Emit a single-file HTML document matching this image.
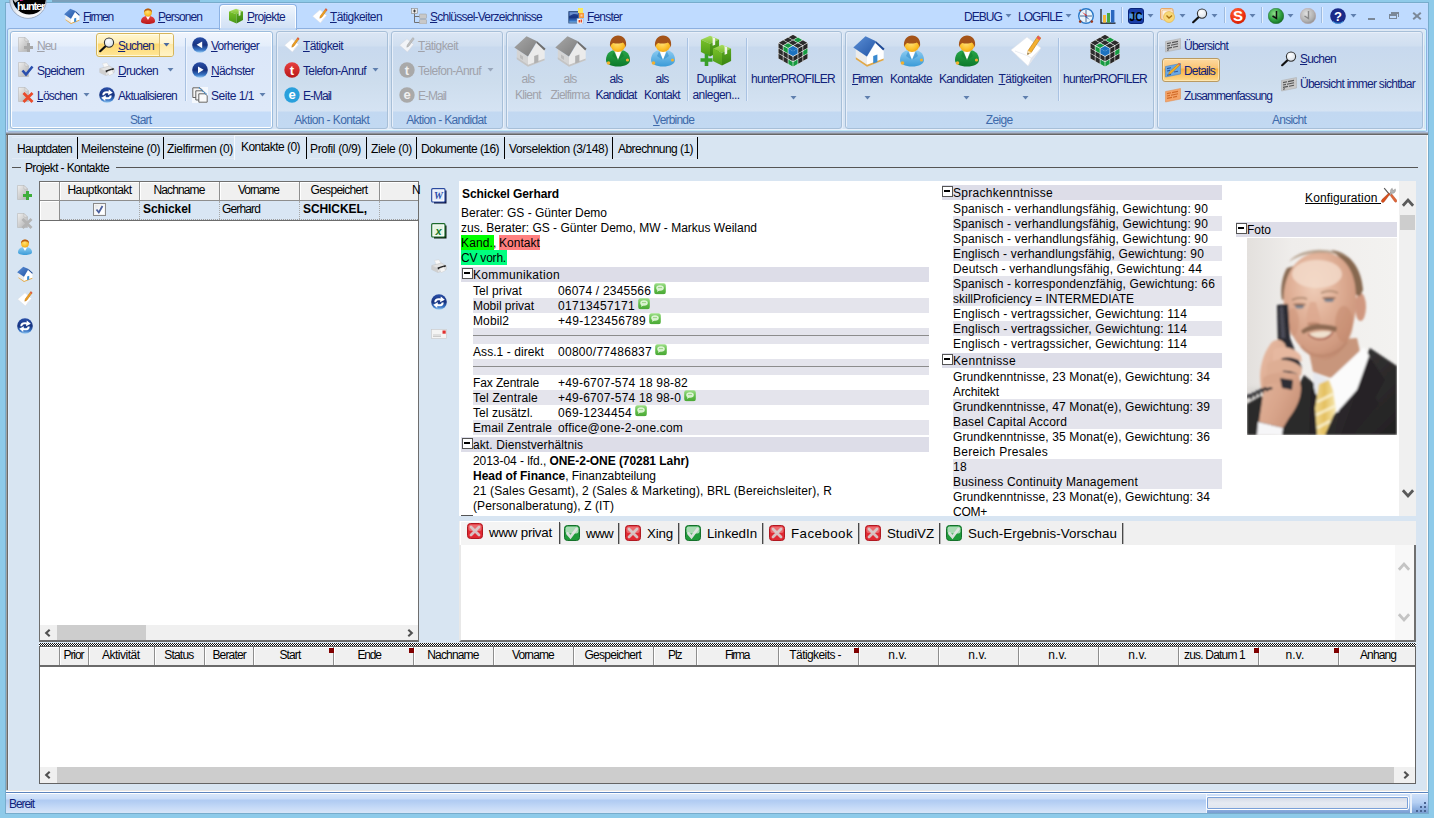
<!DOCTYPE html>
<html lang="de"><head><meta charset="utf-8"><title>hunter</title>
<style>
html,body{margin:0;padding:0}
body{width:1434px;height:818px;overflow:hidden;background:#8ecae9;font-family:"Liberation Sans",sans-serif;font-size:11px;color:#000}
#app{position:absolute;left:0;top:0;width:1434px;height:818px;overflow:hidden}
.r{position:absolute;box-sizing:border-box}
.t{position:absolute;white-space:pre}
.n{color:#10227a}
.g{color:#8d9aae}
u{text-decoration:underline;text-underline-offset:1px;text-decoration-thickness:1px}
b{font-weight:700}

</style></head><body>
<svg width="0" height="0" style="position:absolute"><defs>

<linearGradient id="gDoc" x1="0" y1="0" x2="1" y2="1"><stop offset="0" stop-color="#f0f0f0"/><stop offset="1" stop-color="#b0b0b0"/></linearGradient>
<linearGradient id="gBlue" x1="0" y1="0" x2="0" y2="1"><stop offset="0" stop-color="#2a50a8"/><stop offset=".5" stop-color="#16327f"/><stop offset=".82" stop-color="#3a78c8"/><stop offset="1" stop-color="#9fd0f4"/></linearGradient>
<linearGradient id="gRoof" x1="0" y1="0" x2="1" y2="1"><stop offset="0" stop-color="#5b8fd6"/><stop offset="1" stop-color="#2456a6"/></linearGradient>
<linearGradient id="gRoofG" x1="0" y1="0" x2="1" y2="1"><stop offset="0" stop-color="#a8a8a8"/><stop offset="1" stop-color="#7c7c7c"/></linearGradient>
<radialGradient id="gFace" cx=".45" cy=".4" r=".7"><stop offset="0" stop-color="#ffe27a"/><stop offset=".6" stop-color="#fcc02a"/><stop offset="1" stop-color="#e89a10"/></radialGradient>
<linearGradient id="gGreenB" x1="0" y1="0" x2="0" y2="1"><stop offset="0" stop-color="#2aa84a"/><stop offset="1" stop-color="#0d7a2a"/></linearGradient>
<linearGradient id="gBlueB" x1="0" y1="0" x2="0" y2="1"><stop offset="0" stop-color="#8fcdf2"/><stop offset="1" stop-color="#3a9bd8"/></linearGradient>
<linearGradient id="gRedB" x1="0" y1="0" x2="0" y2="1"><stop offset="0" stop-color="#e84040"/><stop offset="1" stop-color="#b81818"/></linearGradient>
<linearGradient id="gBoxT" x1="0" y1="0" x2="0" y2="1"><stop offset="0" stop-color="#a8dc60"/><stop offset="1" stop-color="#7cc030"/></linearGradient>
<linearGradient id="gBoxL" x1="0" y1="0" x2="0" y2="1"><stop offset="0" stop-color="#78c028"/><stop offset="1" stop-color="#4a9a18"/></linearGradient>
<linearGradient id="gBoxR" x1="0" y1="0" x2="0" y2="1"><stop offset="0" stop-color="#5aa820"/><stop offset="1" stop-color="#3a8410"/></linearGradient>
<radialGradient id="gOrb" cx=".5" cy=".8" r=".8"><stop offset="0" stop-color="#ffffff"/><stop offset=".5" stop-color="#dfe5ee"/><stop offset="1" stop-color="#9aa6b8"/></radialGradient>
<radialGradient id="gGreenC" cx=".4" cy=".35" r=".7"><stop offset="0" stop-color="#8fe08a"/><stop offset=".6" stop-color="#2fa040"/><stop offset="1" stop-color="#116a20"/></radialGradient>
<radialGradient id="gGrayC" cx=".4" cy=".35" r=".7"><stop offset="0" stop-color="#e0e0e0"/><stop offset=".7" stop-color="#b0b0b0"/><stop offset="1" stop-color="#8c8c8c"/></radialGradient>
<radialGradient id="gRedC" cx=".4" cy=".3" r=".8"><stop offset="0" stop-color="#ff6a3a"/><stop offset=".6" stop-color="#f03010"/><stop offset="1" stop-color="#c01800"/></radialGradient>
<radialGradient id="gLens" cx=".4" cy=".35" r=".7"><stop offset="0" stop-color="#ffffff"/><stop offset="1" stop-color="#d8e0e8"/></radialGradient>

<linearGradient id="gBub" x1="0" y1="0" x2="0" y2="1"><stop offset="0" stop-color="#a0e08c"/><stop offset=".5" stop-color="#62be4a"/><stop offset="1" stop-color="#4aa836"/></linearGradient>
<symbol id="doc" viewBox="0 0 16 16"><path d="M.5 .5h6.5l3.500 3.500v10.500h-10z" fill="url(#gDoc)" stroke="#b8b8b8" stroke-width=".6"/><path d="M7 .5v3.500h3.500z" fill="#e8e8e8" stroke="#b0b0b0" stroke-width=".5"/></symbol>
<symbol id="i_new_d" viewBox="0 0 16 16"><use href="#doc"/><path d="M10.5 6v9M6 10.5h9" stroke="#a8a8a8" stroke-width="3"/></symbol>
<symbol id="i_new" viewBox="0 0 16 16"><use href="#doc"/><path d="M10.5 6v9M6 10.5h9" stroke="#3fae3a" stroke-width="3"/></symbol>
<symbol id="i_save" viewBox="0 0 16 16"><use href="#doc"/><path d="M4.5 8.5l3.5 4L14.5 4.5" stroke="#2a4fae" stroke-width="2.6" fill="none"/></symbol>
<symbol id="i_del" viewBox="0 0 16 16"><use href="#doc"/><path d="M5.5 6l9 9M14.5 6l-9 9" stroke="#ea4a2a" stroke-width="2.8"/></symbol>
<symbol id="i_del_d" viewBox="0 0 16 16"><use href="#doc"/><path d="M5.5 6l9 9M14.5 6l-9 9" stroke="#b4b4b4" stroke-width="2.8"/></symbol>
<symbol id="i_search" viewBox="0 0 16 16"><path d="M7 8.8L1.2 14.2" stroke="#111" stroke-width="2.2" stroke-linecap="round"/><circle cx="10" cy="5.6" r="4.6" fill="url(#gLens)" stroke="#333" stroke-width="1.1"/></symbol>
<symbol id="i_print" viewBox="0 0 16 16"><path d="M3.500 1.500l4.500-.8 2.500 4.500-5 1.300z" fill="#fafafa" stroke="#d0d0d0" stroke-width=".4"/><path d="M.8 6.500l9.500-2.500 5 2.800v3.500l-8.300 3.200-6.200-3z" fill="#e4e4e4" stroke="#b4b4b4" stroke-width=".4"/><path d="M.8 6.500l6.200 2.800v4.200l-6.200-3z" fill="#cfcfcf"/><path d="M6.500 8.600l8-2.600.5 1.600-8 3z" fill="#222"/><path d="M8.500 9.600l4.500-1.600 1.500 3.500-4.500 2.200z" fill="#f6f6f6" stroke="#c8c8c8" stroke-width=".4"/></symbol>
<symbol id="i_refresh" viewBox="0 0 16 16"><circle cx="8" cy="8" r="7.800" fill="url(#gBlue)"/><path d="M3.300 8.200C3.200 5 6 3.600 9.600 4.500L9.800 2.500L13.800 5.800L9 8.300L9.300 6.500C7.200 6 5.400 6.600 5.300 8.200z" fill="#fff"/><path d="M3.300 8.200C3.200 5 6 3.600 9.600 4.500L9.800 2.500L13.800 5.800L9 8.300L9.300 6.500C7.200 6 5.400 6.600 5.300 8.200z" fill="#fff" transform="rotate(180 8 8.300)"/></symbol>
<symbol id="i_prev" viewBox="0 0 16 16"><circle cx="8" cy="8" r="7.800" fill="url(#gBlue)"/><path d="M10.200 4.400v6.800L4.600 7.800z" fill="#fff"/></symbol>
<symbol id="i_next" viewBox="0 0 16 16"><circle cx="8" cy="8" r="7.800" fill="url(#gBlue)"/><path d="M6 4.400v6.800l5.600-3.400z" fill="#fff"/></symbol>
<symbol id="i_pages" viewBox="0 0 16 16"><rect width="16" height="16" fill="#fff" opacity=".7"/><path d="M.8 .8h7.200l2 2v7.700H.8z" fill="#f4f4f4" stroke="#555" stroke-width=".9"/><path d="M3.800 3.800h7.200l2 2v7.200H3.800z" fill="#f4f4f4" stroke="#555" stroke-width=".9"/><path d="M6.800 6.800h6.400l2 2v6.400H6.800z" fill="#fafafa" stroke="#555" stroke-width=".9"/><path d="M7 .8l8 7" stroke="#3a8ed8" stroke-width="1.300" stroke-dasharray="1.200 1"/></symbol>
<symbol id="i_pencil" viewBox="0 0 16 16"><path d="M.6 8.2L8 1.800l6.600 5.600L8.400 15z" fill="#fff" stroke="#d8dce4" stroke-width=".5"/><path d="M8.400 15l2-3.500 4-4z" fill="#e4e6ec"/><path d="M13.800 .6l1.400 1.200-5.400 7.400-2 1 .5-2.200z" fill="#f0a020" stroke="#b87010" stroke-width=".5"/><path d="M13.800 .6l1.400 1.200-.8 1.100-1.400-1.200z" fill="#e05050"/></symbol>
<symbol id="i_tel" viewBox="0 0 16 16"><circle cx="8" cy="8" r="7.700" fill="url(#gRedB)"/><text x="8" y="12.600" font-family="Liberation Sans,sans-serif" font-weight="700" font-size="13" fill="#fff" text-anchor="middle">t</text></symbol>
<symbol id="i_mail" viewBox="0 0 16 16"><circle cx="8" cy="8" r="7.700" fill="#2aa0dc"/><text x="8" y="12" font-family="Liberation Sans,sans-serif" font-weight="700" font-size="13" fill="#fff" text-anchor="middle">e</text></symbol>
<symbol id="i_tel_d" viewBox="0 0 16 16"><circle cx="8" cy="8" r="7.700" fill="#a9a9a9"/><text x="8" y="12.600" font-family="Liberation Sans,sans-serif" font-weight="700" font-size="13" fill="#f0f0f0" text-anchor="middle">t</text></symbol>
<symbol id="i_mail_d" viewBox="0 0 16 16"><circle cx="8" cy="8" r="7.700" fill="#a9a9a9"/><text x="8" y="12" font-family="Liberation Sans,sans-serif" font-weight="700" font-size="13" fill="#f0f0f0" text-anchor="middle">e</text></symbol>
<symbol id="i_pencil_d" viewBox="0 0 16 16"><path d="M.6 8.200L8 1.800l6.600 5.600L8.400 15z" fill="#f2f4f8" stroke="#d0d4dc" stroke-width=".5"/><path d="M13.800 .6l1.400 1.200-5.400 7.400-2 1 .5-2.200z" fill="#c0c0c0" stroke="#a0a0a0" stroke-width=".5"/></symbol>

<symbol id="i_house" viewBox="0 0 32 32"><path d="M2.800 14l11.200 8v9.300L2.800 23.800z" fill="#ececec"/><path d="M14 21.500L23 7.500l7.700 7.700v9.800L14 31.300z" fill="#ffffff"/><path d="M2.800 22.300L14 29.800l16.700-6.300v1.800L14 31.800 2.800 24.200z" fill="#e0a848"/><path d="M12.500 1.300L23 6.200 13.900 21.500.3 12.400z" fill="url(#gRoof)"/><path d="M23 6.200l8.600 7.600-1.400 1.600L22.200 7.800z" fill="#1f4a96"/><path d="M20.200 21l4.200-1.600v7.600l-4.200 1.600z" fill="#3a8ad0"/></symbol>
<symbol id="i_person_r" viewBox="0 0 16 16"><path d="M1 13.500c0-4 3-5.500 7-5.500s7 1.500 7 5.500c0 1.500-3 2.500-7 2.500s-7-1-7-2.500z" fill="url(#gRedB)"/><path d="M5.800 8.200L8 12l2.200-3.800z" fill="#fff"/><circle cx="8" cy="4.600" r="3.900" fill="url(#gFace)"/><path d="M4.100 4.600C3.800 1.600 6 .4 8 .4s4.400 1.200 3.900 4.200c-.6-1.600-2-2.400-3.900-2.400-1.800 0-3.200.8-3.900 2.400z" fill="#b85a10"/></symbol>
<symbol id="i_person_b" viewBox="0 0 16 16"><path d="M1 13.500c0-4 3-5.500 7-5.500s7 1.500 7 5.500c0 1.500-3 2.500-7 2.500s-7-1-7-2.500z" fill="url(#gBlueB)"/><path d="M5.800 8.200L8 12l2.200-3.800z" fill="#fff"/><circle cx="8" cy="4.600" r="3.900" fill="url(#gFace)"/><path d="M4.100 4.600C3.800 1.600 6 .4 8 .4s4.400 1.200 3.900 4.200c-.6-1.600-2-2.400-3.900-2.400-1.800 0-3.200.8-3.900 2.400z" fill="#b85a10"/></symbol>
<symbol id="i_box" viewBox="0 0 16 16"><path d="M1 3.500L8 .8l7 2.400-6.500 3z" fill="url(#gBoxT)"/><path d="M1 3.500l7.500 2.700V15.400L1 12.200z" fill="url(#gBoxL)"/><path d="M8.500 6.200L15 3.200v8.800l-6.500 3.400z" fill="url(#gBoxR)"/><path d="M10.500 2l2 .7v4.500l-1.800.9V3.300z" fill="#e8f0e0"/></symbol>
<symbol id="i_tree" viewBox="0 0 16 16"><path d="M3.500 4v10.500h5M3.500 8.500h5" stroke="#707070" stroke-width="1" fill="none"/><rect x=".5" y=".5" width="6" height="5" fill="#e8e8e8" stroke="#888" stroke-width=".6"/><path d="M3.500 1.500v3M2 3h3" stroke="#333" stroke-width=".9"/><rect x="8.500" y="6" width="7" height="4.500" rx=".8" fill="#c8c8c8" stroke="#999" stroke-width=".5"/><rect x="8.500" y="11.500" width="7" height="4.500" rx=".8" fill="#c8c8c8" stroke="#999" stroke-width=".5"/></symbol>
<symbol id="i_win" viewBox="0 0 16 16"><rect x=".8" y="3.600" width="9.500" height="11.400" fill="url(#gBlue)" stroke="#2a4a78" stroke-width=".8"/><path d="M1.500 8c3-2.500 6-2.500 8.500-1.500V4.300H1.500z" fill="#9cc4f0" opacity=".6"/><rect x="10" y="0" width="5" height="5" fill="#f8e860"/><rect x="11" y="5" width="5" height="5" fill="#f89838"/><path d="M12.500 6.500h2v2h-2z" fill="#fcd0a0"/><rect x="9" y="10.500" width="6" height="5.500" fill="#fff" stroke="#7a9ac0" stroke-width=".5"/><path d="M10.500 12h1.500v2.500h-1.500zM12.500 11.500h1.500v3h-1.500z" fill="#e84820"/></symbol>

<symbol id="i_card_g" viewBox="0 0 16 16"><path d="M.5 4.500L15.500 1.500v10.500L.5 15z" fill="#c8c8c8" stroke="#aaa" stroke-width=".5"/><path d="M2 6.600l4-.8M7 5.600l6-1.200M2 9l3-.6M6 8.200l7-1.400M2 11.400l5-1M8 10.200l5-1M2 13.200l2-.4" stroke="#555" stroke-width="1.100"/></symbol>
<symbol id="i_card_o" viewBox="0 0 16 16"><path d="M.5 4.500L15.500 1.500v10.500L.5 15z" fill="#f4a468" stroke="#e08848" stroke-width=".5"/><path d="M2 6.600l4-.8M7 5.600l6-1.200M2 9l3-.6M6 8.200l7-1.400M2 11.400l5-1M8 10.200l4-.8" stroke="#d06a28" stroke-width="1.100"/></symbol>
<symbol id="i_card_b" viewBox="0 0 16 16"><path d="M.5 4.500L15.500 1.500v10.500L.5 15z" fill="#6aa8e4" stroke="#3a78c0" stroke-width=".5"/><path d="M2 6.600l4-.8M2 9l3-.6M9 10l4-.8M2 13.200l4-.8" stroke="#2a5aa0" stroke-width="1.100"/><path d="M14 1.200l1.500 1.300L6 11.500l-2.500 1 .8-2.400z" fill="#f4b020" stroke="#b87810" stroke-width=".5"/><path d="M14 1.200l1.500 1.300-1 .9L13 2.100z" fill="#e85858"/></symbol>

<symbol id="i_compass" viewBox="0 0 16 16"><circle cx="8" cy="8" r="7.300" fill="#e8f4fc" stroke="#2a78c8" stroke-width="1.400"/><path d="M8 2v12M2 8h12" stroke="#2a4a78" stroke-width=".8"/><path d="M4 4l5.200 3.200L8 8z" fill="#d82020"/><path d="M12 12L6.800 8.800 8 8z" fill="#2a58b0"/><circle cx="2.200" cy="13.600" r="1.300" fill="#a03818"/><circle cx="13.800" cy="13.600" r="1.300" fill="#a03818"/><circle cx="2.400" cy="2.400" r="1" fill="#a03818"/></symbol>
<symbol id="i_chart" viewBox="0 0 16 16"><path d="M1 1v14.200h14.500" stroke="#111" stroke-width="1.200" fill="none"/><rect x="3" y="7" width="3" height="7.600" fill="#f4b838"/><rect x="7" y="5" width="3" height="9.600" fill="#4aa840"/><rect x="11" y="2" width="3.400" height="12.600" fill="#2a68c0"/></symbol>
<symbol id="i_jc" viewBox="0 0 16 16"><rect x=".5" y=".5" width="15" height="15" rx="2.500" fill="#1a3ea8" stroke="#0a2478"/><rect x="1.200" y="5.500" width="13.600" height="5.500" fill="#58a8f0" opacity=".8"/><text x="8" y="13" font-family="Liberation Sans,sans-serif" font-weight="700" font-size="13" fill="#000" text-anchor="middle" textLength="13" lengthAdjust="spacingAndGlyphs">JC</text></symbol>
<symbol id="i_mailclock" viewBox="0 0 16 16"><rect x=".5" y=".5" width="12.500" height="11" rx="1.500" fill="#fbe4c8" stroke="#e8a058" stroke-width=".9"/><rect x="2" y="2" width="11" height="10" rx="1.500" fill="#fdf0e0" stroke="#eab070" stroke-width=".7"/><circle cx="9" cy="9" r="5.500" fill="#f8d878" stroke="#e0b040" stroke-width=".6"/><path d="M6.500 7.500L9 10l3-2.500" stroke="#a87010" stroke-width="1.300" fill="none"/></symbol>
<symbol id="i_s" viewBox="0 0 16 16"><circle cx="8" cy="8" r="7.900" fill="url(#gRedC)"/><text x="8" y="13.400" font-family="Liberation Sans,sans-serif" font-weight="700" font-size="15" fill="#fff" text-anchor="middle">S</text></symbol>
<symbol id="i_clock_g" viewBox="0 0 16 16"><circle cx="8" cy="8" r="7.800" fill="url(#gGreenC)" stroke="#0f5a1c" stroke-width=".4"/><path d="M8.500 3v7.500L4.500 8" stroke="#111" stroke-width="1.500" fill="none"/></symbol>
<symbol id="i_clock_d" viewBox="0 0 16 16"><circle cx="8" cy="8" r="7.800" fill="url(#gGrayC)" stroke="#c0a0a0" stroke-width=".4"/><path d="M8.500 3v7.500L4.500 8" stroke="#888" stroke-width="1.400" fill="none"/></symbol>
<symbol id="i_help" viewBox="0 0 16 16"><circle cx="8" cy="8" r="7.800" fill="#1a2a88"/><path d="M3 13.500a7.800 7.800 0 0 0 10 0" stroke="#3a9ae0" stroke-width="1" fill="none"/><text x="8" y="12.800" font-family="Liberation Sans,sans-serif" font-weight="700" font-size="13" fill="#fff" text-anchor="middle">?</text></symbol>

<symbol id="i_word" viewBox="0 0 16 16"><path d="M3 2.500h12.500v13H3z" fill="#0c1440"/><rect x=".7" y=".7" width="13.300" height="13.300" rx="1" fill="#fff" stroke="#2a4aa0" stroke-width="1.200"/><rect x="2.300" y="2.300" width="10" height="10" fill="#e4ecfa"/><text x="7.500" y="11" font-family="Liberation Serif,serif" font-weight="700" font-style="italic" font-size="10" fill="#2a4aa8" text-anchor="middle">W</text></symbol>
<symbol id="i_excel" viewBox="0 0 16 16"><path d="M3 2.500h12.500v13H3z" fill="#0a1a0c"/><rect x=".7" y=".7" width="13.300" height="13.300" rx="1" fill="#fff" stroke="#1a6a2a" stroke-width="1.200"/><rect x="2.300" y="2.300" width="10" height="10" fill="#e4f4e4"/><text x="7.500" y="11.500" font-family="Liberation Sans,sans-serif" font-weight="700" font-style="italic" font-size="11" fill="#1a7a2a" text-anchor="middle">x</text></symbol>
<symbol id="i_env" viewBox="0 0 16 16"><rect x=".5" y="3.500" width="15" height="9" fill="#f4f4f4" stroke="#c8c8c8" stroke-width=".6"/><path d="M2 9h8M2 10.500h8" stroke="#c0c0c0" stroke-width=".8"/><rect x="11.500" y="4.500" width="3.200" height="3.200" fill="#e03030"/></symbol>
<symbol id="i_wrench" viewBox="0 0 16 16"><path d="M3.200 1.200L8.600 7.600" stroke="#555" stroke-width="1.100"/><path d="M8 6.800l1.600-1.200 6 7.400c.6.800.4 1.600-.2 2-.6.400-1.400.2-1.900-.5z" fill="#e0683a" stroke="#a84420" stroke-width=".4"/><path d="M9.800 5.600C9 4 9.600 2 11.200 1.200l.4 1.800 1.500.3 1-1.500c.8 1.400.4 3.200-1 4.100-.6.400-1.300.5-2 .4L9 8.500 7.800 7.400z" fill="#b4b4b4" stroke="#808080" stroke-width=".4"/><path d="M8.800 7.200L7.600 6.200 1 12.600c-.8.800-.9 1.900-.2 2.500.7.600 1.700.5 2.400-.3z" fill="#d8501c" stroke="#98300c" stroke-width=".4"/></symbol>

<symbol id="bubble" viewBox="0 0 12 11.500"><rect x=".2" y=".2" width="11.600" height="11.100" rx="2.200" fill="url(#gBub)"/><ellipse cx="6" cy="5" rx="3.800" ry="2.700" fill="#e4f6dc" opacity=".92"/><path d="M3.500 6.500L3 9l2.500-1.800z" fill="#e4f6dc" opacity=".92"/><path d="M4 4.600h4" stroke="#8ed07a" stroke-width=".9"/></symbol>
<symbol id="wx" viewBox="0 0 16 16"><rect x=".5" y=".5" width="15" height="15" rx="3" fill="#e02832" stroke="#b01820"/><rect x="1.500" y="1.500" width="13" height="6.500" rx="2" fill="#f4a0a0" opacity=".55"/><path d="M4 4l8 8M12 4l-8 8" stroke="#d8d0d0" stroke-width="2.800" stroke-linecap="round" opacity=".9"/></symbol>
<symbol id="wc" viewBox="0 0 16 16"><rect x=".5" y=".5" width="15" height="15" rx="3" fill="#1f9a3a" stroke="#14702a"/><rect x="1.500" y="1.500" width="13" height="7" rx="2" fill="#d8f0dc" opacity=".75"/><path d="M3.500 8.500l3 3.500L12.500 4" stroke="#e4e4e4" stroke-width="2.800" stroke-linecap="round" fill="none" opacity=".95"/></symbol>

<symbol id="b_house_d" viewBox="0 0 32 32"><path d="M2.800 14l11.200 8v9.300L2.800 23.800z" fill="#d4d4d4"/><path d="M14 21.500L23 7.500l7.700 7.700v9.800L14 31.300z" fill="#ebebeb"/><path d="M2.800 22.300L14 29.800l16.700-6.300v1.800L14 31.800 2.800 24.200z" fill="#c4c4c4"/><path d="M12.500 1.300L23 6.200 13.900 21.500.3 12.400z" fill="url(#gRoofG)"/><path d="M23 6.200l8.600 7.600-1.400 1.600L22.200 7.800z" fill="#6e6e6e"/><path d="M20.200 21l4.200-1.600v7.600l-4.200 1.600z" fill="#b0b0b0"/><path d="M6 19.500l3 2v3.500l-3-2z" fill="#bcbcbc"/></symbol>
<symbol id="b_house" viewBox="0 0 32 32"><path d="M2.800 14l11.200 8v9.300L2.800 23.800z" fill="#ececec"/><path d="M14 21.500L23 7.500l7.700 7.700v9.800L14 31.300z" fill="#ffffff"/><path d="M2.800 22.300L14 29.800l16.700-6.300v1.800L14 31.800 2.800 24.200z" fill="#e0a848"/><path d="M12.500 1.300L23 6.200 13.900 21.500.3 12.400z" fill="url(#gRoof)"/><path d="M23 6.200l8.600 7.600-1.400 1.600L22.200 7.800z" fill="#1f4a96"/><path d="M20.200 21l4.200-1.600v7.600l-4.200 1.600z" fill="#3a8ad0"/></symbol>
<symbol id="b_person_g" viewBox="0 0 32 32"><path d="M4 25c0-7 5-10.500 12-10.500S28 18 28 25c0 4-5 6.500-12 6.500S4 29 4 25z" fill="url(#gGreenB)"/><path d="M11.500 15L16 25l4.500-10z" fill="#fff"/><path d="M12.500 15.500L16 25l-6-4zM19.500 15.500L16 25l6-4z" fill="#0d7a2a" opacity=".5"/><circle cx="6.500" cy="28" r="1.800" fill="#f0b030"/><circle cx="25.500" cy="25" r="1.600" fill="#f0b030"/><circle cx="16" cy="9.500" r="7.600" fill="url(#gFace)"/><path d="M8.200 12.500C6.800 4.500 11.500 .4 16 .4c5 0 9.600 4 7.800 12-.6-2.600-1.600-4-3-5-2 1.200-6 1.600-9.600.6-1.600 1-2.600 2.400-3 4.500z" fill="#a4541a"/></symbol>
<symbol id="b_person_b" viewBox="0 0 32 32"><path d="M4 25c0-7 5-10.500 12-10.500S28 18 28 25c0 4-5 6.500-12 6.500S4 29 4 25z" fill="url(#gBlueB)"/><path d="M11.500 15L16 25l4.500-10z" fill="#fff"/><path d="M12.500 15.500L16 25l-6-4zM19.500 15.500L16 25l6-4z" fill="#2a88c8" opacity=".5"/><circle cx="6.500" cy="28" r="1.800" fill="#f0b030"/><circle cx="25.500" cy="25" r="1.600" fill="#f0b030"/><circle cx="16" cy="9.500" r="7.600" fill="url(#gFace)"/><path d="M8.200 12.500C6.800 4.500 11.500 .4 16 .4c5 0 9.600 4 7.800 12-.6-2.600-1.600-4-3-5-2 1.200-6 1.600-9.600.6-1.600 1-2.600 2.400-3 4.500z" fill="#a4541a"/></symbol>
<symbol id="b_cube1" viewBox="0 0 22 24"><path d="M1 5L11 .8l10 4-10 4.700z" fill="url(#gBoxT)"/><path d="M1 5l10 4.500V23.500L1 18.500z" fill="url(#gBoxL)"/><path d="M11 9.500L21 4.800v13.700l-10 5z" fill="url(#gBoxR)"/><path d="M13.500 2.200l3.200 1.300v7l-2.800 1.300V4z" fill="#f0f4ec"/></symbol>
<symbol id="b_dup" viewBox="0 0 32 32"><use href="#b_cube1" x="0" y="0" width="20" height="22"/><use href="#b_cube1" x="12" y="9" width="20" height="22"/><path d="M6.500 19v12M.5 25h12" stroke="#38a028" stroke-width="3.600"/></symbol>
<symbol id="b_cube" viewBox="0 0 32 32"><path d="M16.00 -0.60L30.80 7.80L30.80 23.60L16.00 32.00L1.20 23.60L1.20 7.80z" fill="#f2f2f2"/><path d="M16.00 16.20L11.39 13.58L16.00 10.97L20.61 13.58z" fill="#1c72c0"/><path d="M20.93 13.03L16.65 10.60L20.93 8.17L25.22 10.60z" fill="#2b2b2b"/><path d="M25.87 10.23L21.58 7.80L25.87 5.37L30.15 7.80z" fill="#2b2b2b"/><path d="M11.07 13.03L6.78 10.60L11.07 8.17L15.35 10.60z" fill="#159a40"/><path d="M16.00 10.23L11.72 7.80L16.00 5.37L20.28 7.80z" fill="#2b2b2b"/><path d="M20.93 7.43L16.65 5.00L20.93 2.57L25.22 5.00z" fill="#159a40"/><path d="M6.13 10.23L1.85 7.80L6.13 5.37L10.42 7.80z" fill="#2b2b2b"/><path d="M11.07 7.43L6.78 5.00L11.07 2.57L15.35 5.00z" fill="#2b2b2b"/><path d="M16.00 4.63L11.72 2.20L16.00 -0.23L20.28 2.20z" fill="#2b2b2b"/><path d="M16.00 16.20L11.39 13.58L11.39 18.50L16.00 21.12z" fill="#1c72c0"/><path d="M15.67 21.63L11.39 19.20L11.39 23.77L15.67 26.20z" fill="#2b2b2b"/><path d="M15.67 26.90L11.39 24.47L11.39 29.04L15.67 31.47z" fill="#159a40"/><path d="M10.74 13.56L6.46 11.13L6.46 15.70L10.74 18.13z" fill="#159a40"/><path d="M10.74 18.83L6.46 16.40L6.46 20.97L10.74 23.40z" fill="#2b2b2b"/><path d="M10.74 24.10L6.46 21.67L6.46 26.24L10.74 28.67z" fill="#2b2b2b"/><path d="M5.81 10.76L1.53 8.33L1.53 12.90L5.81 15.33z" fill="#2b2b2b"/><path d="M5.81 16.03L1.53 13.60L1.53 18.17L5.81 20.60z" fill="#2b2b2b"/><path d="M5.81 21.30L1.53 18.87L1.53 23.44L5.81 25.87z" fill="#2b2b2b"/><path d="M16.00 16.20L20.61 13.58L20.61 18.50L16.00 21.12z" fill="#1c72c0"/><path d="M16.33 21.63L20.61 19.20L20.61 23.77L16.33 26.20z" fill="#262626"/><path d="M16.33 26.90L20.61 24.47L20.61 29.04L16.33 31.47z" fill="#159a40"/><path d="M21.26 13.56L25.54 11.13L25.54 15.70L21.26 18.13z" fill="#262626"/><path d="M21.26 18.83L25.54 16.40L25.54 20.97L21.26 23.40z" fill="#262626"/><path d="M21.26 24.10L25.54 21.67L25.54 26.24L21.26 28.67z" fill="#262626"/><path d="M26.19 10.76L30.47 8.33L30.47 12.90L26.19 15.33z" fill="#262626"/><path d="M26.19 16.03L30.47 13.60L30.47 18.17L26.19 20.60z" fill="#159a40"/><path d="M26.19 21.30L30.47 18.87L30.47 23.44L26.19 25.87z" fill="#262626"/></symbol>
<symbol id="b_paper" viewBox="0 0 32 32"><path d="M1 15L17 2l14 11-13 18z" fill="#fff" stroke="#dfe3ea" stroke-width=".6"/><path d="M18 31l3-8 10-10z" fill="#e2e5ec"/><path d="M5 16l13 5 3 2" stroke="#e4e7ee" stroke-width=".8" fill="none"/><path d="M28 .8l2.800 2.200-9.600 14.500-3.600 2 .6-4z" fill="#f4b030" stroke="#b87810" stroke-width=".6"/><path d="M28 .8l2.800 2.200-1.400 2.200-2.800-2.200z" fill="#e85858"/><path d="M17.600 19.500l.6-4 3 2.200z" fill="#f8e0b0"/><path d="M17.600 19.500l.2-1.600 1.200.9z" fill="#333"/></symbol>
<symbol id="orb" viewBox="0 0 40 40"><clipPath id="orbc"><circle cx="20" cy="20" r="18.600"/></clipPath><circle cx="20" cy="20" r="19.300" fill="url(#gOrb)" stroke="#8a98b0" stroke-width=".8"/><g clip-path="url(#orbc)"><circle cx="21.500" cy="17.500" r="17.800" fill="#000"/><path d="M2 16C5 8 12 3 19 2.500l-.5 11-5 4.500-7 5z" fill="#c4c4c4"/><path d="M11.500 20.500c3.500-.5 6.500-1.500 7.500-5.500" stroke="#e0208a" stroke-width="1.300" fill="none"/><path d="M7 31C14 37.500 30 38 38.500 28C36 34.500 28 38.800 20 38.800C13 38.800 8.500 35 7 31z" fill="#f4f6fa"/></g></symbol>

</defs></svg>
<div id="app">
<div class="r " style="left:5px;top:2px;width:1424px;height:812px;background:#77accc;"></div>
<div class="r " style="left:6px;top:3px;width:1422px;height:810px;background:#bfdbff;border-top:1px solid #c5deff;"></div>
<div class="r " style="left:52px;top:0px;width:148px;height:1.5px;background:#7ba0bb;"></div>
<div class="r " style="left:7px;top:28px;width:1420px;height:104px;background:linear-gradient(#dfe9f5 0,#dfe9f5 2px,#d9e5f4 4px,#d0dff0 16px,#c8d9ee 17px,#cddded 51px,#d5e3f3 81px,#d5e3f3 100%);border:1px solid #8db0e0;border-bottom-color:#9db8da;border-radius:3px;"></div>
<div class="r " style="left:8px;top:30px;width:1px;height:100px;background:#cdeef8;"></div>
<div class="r " style="left:1425px;top:30px;width:1px;height:100px;background:#cdf3fa;"></div>
<div class="r " style="left:8px;top:129px;width:1418px;height:1px;background:#ecf4fc;"></div>
<div class="r " style="left:8px;top:130px;width:1418px;height:1px;background:#bfe7f5;"></div>
<div class="r " style="left:6px;top:132px;width:1422px;height:1px;background:#a7b5cc;"></div>
<div class="r " style="left:6px;top:133px;width:1422px;height:1px;background:#8a8f98;"></div>
<div class="r " style="left:6px;top:134px;width:1422px;height:658px;background:#d8e5f2;border-top:1px solid #686766;"></div>
<div class="r " style="left:6px;top:135px;width:1px;height:657px;background:#9fa3a5;"></div>
<div class="r " style="left:7px;top:135px;width:1px;height:657px;background:#6a6968;"></div>
<div class="r " style="left:8px;top:135px;width:1418px;height:1px;background:#e4eefb;"></div>
<div class="r " style="left:8px;top:136px;width:1px;height:656px;background:#e1edfb;"></div>
<div class="r " style="left:1426px;top:135px;width:1px;height:657px;background:#e3e3e3;"></div>
<div class="r " style="left:1427px;top:135px;width:1px;height:657px;background:#fff;"></div>
<div class="r " style="left:10px;top:31px;width:263px;height:98px;background:linear-gradient(#f0f5fd 0,#e4eefb 14px,#dbe7f9 15px,#dee9f9 79px,#c5dcf8 80px,#c5dcf8 100%);border:1px solid #9bbcdd;border-radius:3px;box-shadow:inset 0 0 0 1px #fff;"></div>
<span class="t " style="left:129.90px;top:113.10px;line-height:14px;font-size:12px;letter-spacing:-0.789px;color:#3e6aaa;">Start</span>
<div class="r " style="left:277px;top:32px;width:112px;height:98px;background:transparent;border:1px solid #e8eff9;border-radius:3px;"></div>
<div class="r " style="left:276px;top:31px;width:112px;height:98px;background:linear-gradient(#dbe6f4 0,#d0dff0 14px,#c8d9ee 15px,#cddded 50px,#d5e3f3 79px,#c2d8f1 80px,#c2d9f2 100%);border:1px solid #a7bfd8;border-radius:3px;box-shadow:inset 1px 1px 0 #e8eff9;"></div>
<span class="t " style="left:294.20px;top:113.10px;line-height:14px;font-size:12px;letter-spacing:-0.607px;color:#3e6aaa;">Aktion - Kontakt</span>
<div class="r " style="left:392px;top:32px;width:112px;height:98px;background:transparent;border:1px solid #e8eff9;border-radius:3px;"></div>
<div class="r " style="left:391px;top:31px;width:112px;height:98px;background:linear-gradient(#dbe6f4 0,#d0dff0 14px,#c8d9ee 15px,#cddded 50px,#d5e3f3 79px,#c2d8f1 80px,#c2d9f2 100%);border:1px solid #a7bfd8;border-radius:3px;box-shadow:inset 1px 1px 0 #e8eff9;"></div>
<span class="t " style="left:406.20px;top:113.10px;line-height:14px;font-size:12px;letter-spacing:-0.670px;color:#3e6aaa;">Aktion - Kandidat</span>
<div class="r " style="left:507px;top:32px;width:336px;height:98px;background:transparent;border:1px solid #e8eff9;border-radius:3px;"></div>
<div class="r " style="left:506px;top:31px;width:336px;height:98px;background:linear-gradient(#dbe6f4 0,#d0dff0 14px,#c8d9ee 15px,#cddded 50px,#d5e3f3 79px,#c2d8f1 80px,#c2d9f2 100%);border:1px solid #a7bfd8;border-radius:3px;box-shadow:inset 1px 1px 0 #e8eff9;"></div>
<span class="t " style="left:653.10px;top:113.10px;line-height:14px;font-size:12px;letter-spacing:-0.797px;color:#3e6aaa;"><u>V</u>erbinde</span>
<div class="r " style="left:846px;top:32px;width:309px;height:98px;background:transparent;border:1px solid #e8eff9;border-radius:3px;"></div>
<div class="r " style="left:845px;top:31px;width:309px;height:98px;background:linear-gradient(#dbe6f4 0,#d0dff0 14px,#c8d9ee 15px,#cddded 50px,#d5e3f3 79px,#c2d8f1 80px,#c2d9f2 100%);border:1px solid #a7bfd8;border-radius:3px;box-shadow:inset 1px 1px 0 #e8eff9;"></div>
<span class="t " style="left:985.85px;top:113.10px;line-height:14px;font-size:12px;letter-spacing:-0.666px;color:#3e6aaa;">Zeige</span>
<div class="r " style="left:1158px;top:32px;width:266px;height:98px;background:transparent;border:1px solid #e8eff9;border-radius:3px;"></div>
<div class="r " style="left:1157px;top:31px;width:266px;height:98px;background:linear-gradient(#dbe6f4 0,#d0dff0 14px,#c8d9ee 15px,#cddded 50px,#d5e3f3 79px,#c2d8f1 80px,#c2d9f2 100%);border:1px solid #a7bfd8;border-radius:3px;box-shadow:inset 1px 1px 0 #e8eff9;"></div>
<span class="t " style="left:1272.00px;top:113.10px;line-height:14px;font-size:12px;letter-spacing:-0.766px;color:#3e6aaa;">Ansicht</span>
<div class="r " style="left:219px;top:4px;width:78px;height:26px;background:linear-gradient(#f0f6fd,#dde9f8 55%,#d0e0f5);border:1px solid #8db2e3;border-bottom:none;border-radius:4px 4px 0 0;box-shadow:inset 1px 1px 0 rgba(255,255,255,.9), inset -1px 0 0 rgba(255,255,255,.9);"></div>
<div class="r " style="left:220px;top:28px;width:76px;height:2px;background:#c5daf5;"></div>
<span class="t n" style="left:83.00px;top:10.10px;line-height:14px;font-size:12px;letter-spacing:-1.227px;"><u>F</u>irmen</span>
<span class="t n" style="left:158.00px;top:10.10px;line-height:14px;font-size:12px;letter-spacing:-0.924px;"><u>P</u>ersonen</span>
<span class="t n" style="left:247.00px;top:10.10px;line-height:14px;font-size:12px;letter-spacing:-0.756px;"><u>P</u>rojekte</span>
<span class="t n" style="left:330.00px;top:10.10px;line-height:14px;font-size:12px;letter-spacing:-0.611px;"><u>T</u>ätigkeiten</span>
<span class="t n" style="left:430.00px;top:10.10px;line-height:14px;font-size:12px;letter-spacing:-0.757px;"><u>S</u>chlüssel-Verzeichnisse</span>
<span class="t n" style="left:587.00px;top:10.10px;line-height:14px;font-size:12px;letter-spacing:-0.815px;"><u>F</u>enster</span>
<span class="t n" style="left:964.00px;top:10.10px;line-height:14px;font-size:12px;letter-spacing:-0.938px;">DEBUG</span>
<span class="t n" style="left:1018.00px;top:10.10px;line-height:14px;font-size:12px;letter-spacing:-0.955px;">LOGFILE</span>
<svg class="r" style="left:1005px;top:14px" width="7" height="4" viewBox="0 0 7 4"><path d="M0.5 0h6L3.5 3.6z" fill="#5f7fae"/></svg>
<svg class="r" style="left:1065px;top:14px" width="7" height="4" viewBox="0 0 7 4"><path d="M0.5 0h6L3.5 3.6z" fill="#5f7fae"/></svg>
<svg class="r" style="left:1147px;top:14px" width="7" height="4" viewBox="0 0 7 4"><path d="M0.5 0h6L3.5 3.6z" fill="#5f7fae"/></svg>
<svg class="r" style="left:1179px;top:14px" width="7" height="4" viewBox="0 0 7 4"><path d="M0.5 0h6L3.5 3.6z" fill="#5f7fae"/></svg>
<svg class="r" style="left:1211px;top:14px" width="7" height="4" viewBox="0 0 7 4"><path d="M0.5 0h6L3.5 3.6z" fill="#5f7fae"/></svg>
<svg class="r" style="left:1249px;top:14px" width="7" height="4" viewBox="0 0 7 4"><path d="M0.5 0h6L3.5 3.6z" fill="#5f7fae"/></svg>
<svg class="r" style="left:1287px;top:14px" width="7" height="4" viewBox="0 0 7 4"><path d="M0.5 0h6L3.5 3.6z" fill="#5f7fae"/></svg>
<svg class="r" style="left:1350px;top:14px" width="7" height="4" viewBox="0 0 7 4"><path d="M0.5 0h6L3.5 3.6z" fill="#5f7fae"/></svg>
<div class="r " style="left:1121px;top:7px;width:1px;height:16px;background:#9ebbe0;"></div>
<div class="r " style="left:1122px;top:7px;width:1px;height:16px;background:#e4effc;"></div>
<div class="r " style="left:1224px;top:7px;width:1px;height:16px;background:#9ebbe0;"></div>
<div class="r " style="left:1225px;top:7px;width:1px;height:16px;background:#e4effc;"></div>
<div class="r " style="left:1261px;top:7px;width:1px;height:16px;background:#9ebbe0;"></div>
<div class="r " style="left:1262px;top:7px;width:1px;height:16px;background:#e4effc;"></div>
<div class="r " style="left:1321px;top:7px;width:1px;height:16px;background:#9ebbe0;"></div>
<div class="r " style="left:1322px;top:7px;width:1px;height:16px;background:#e4effc;"></div>
<div class="r " style="left:1368px;top:17.5px;width:7px;height:2px;background:#7b8898;"></div>
<div class="r " style="left:1389px;top:14px;width:8px;height:5px;border:1px solid #7b8898;border-top:2px solid #7b8898;"></div>
<div class="r " style="left:1391px;top:12px;width:8px;height:3px;border:1px solid #7b8898;border-top:2px solid #7b8898;border-bottom:none;border-left:none"></div>
<div class="r " style="left:1398px;top:14px;width:1px;height:3px;background:#7b8898;"></div>
<svg class="r" style="left:1412px;top:12px" width="10" height="8" viewBox="0 0 10 8"><path d="M1.200 .8l7.600 6.400M8.800 .8l-7.600 6.400" stroke="#7b8898" stroke-width="2" fill="none"/></svg>
<div class="r " style="left:96px;top:33px;width:78px;height:24px;background:linear-gradient(#fff7d3 0,#ffedb0 9px,#ffd870 10px,#ffe697 100%);border:1px solid #d5b55a;border-radius:3px;box-shadow:inset 0 0 0 1px rgba(255,255,240,.7);"></div>
<div class="r " style="left:160px;top:34px;width:13px;height:22px;background:linear-gradient(#fffceb,#fff4cc 45%,#ffe9a6 46%,#fff3c6);border-radius:0 2px 2px 0;"></div>
<div class="r " style="left:159px;top:34px;width:1px;height:22px;background:#dcc070;"></div>
<span class="t " style="left:37.00px;top:39.10px;line-height:14px;font-size:12px;letter-spacing:-1.010px;color:#a0a2aa;"><u>N</u>eu</span>
<span class="t n" style="left:37.00px;top:64.10px;line-height:14px;font-size:12px;letter-spacing:-0.785px;">S<u>p</u>eichern</span>
<span class="t n" style="left:37.00px;top:89.10px;line-height:14px;font-size:12px;letter-spacing:-0.770px;"><u>L</u>öschen</span>
<svg class="r" style="left:83px;top:93px" width="7" height="4" viewBox="0 0 7 4"><path d="M0.5 0h6L3.5 3.6z" fill="#5f7fae"/></svg>
<span class="t n" style="left:118.00px;top:39.10px;line-height:14px;font-size:12px;letter-spacing:-0.786px;"><u>S</u>uchen</span>
<svg class="r" style="left:163px;top:43px" width="7" height="4" viewBox="0 0 7 4"><path d="M0.5 0h6L3.5 3.6z" fill="#4a6aa0"/></svg>
<span class="t n" style="left:118.00px;top:64.10px;line-height:14px;font-size:12px;letter-spacing:-0.672px;"><u>D</u>rucken</span>
<svg class="r" style="left:167px;top:68px" width="7" height="4" viewBox="0 0 7 4"><path d="M0.5 0h6L3.5 3.6z" fill="#5f7fae"/></svg>
<span class="t n" style="left:118.00px;top:89.10px;line-height:14px;font-size:12px;letter-spacing:-0.746px;">Aktualisieren</span>
<div class="r " style="left:185px;top:38px;width:1px;height:63px;background:#a9c2e2;"></div>
<div class="r " style="left:186px;top:38px;width:1px;height:63px;background:#edf4fd;"></div>
<span class="t n" style="left:211.00px;top:39.10px;line-height:14px;font-size:12px;letter-spacing:-0.738px;"><u>V</u>orheriger</span>
<span class="t n" style="left:211.00px;top:64.10px;line-height:14px;font-size:12px;letter-spacing:-0.629px;"><u>N</u>ächster</span>
<span class="t n" style="left:211.00px;top:89.10px;line-height:14px;font-size:12px;letter-spacing:-0.486px;">Seite 1/1</span>
<svg class="r" style="left:259px;top:93px" width="7" height="4" viewBox="0 0 7 4"><path d="M0.5 0h6L3.5 3.6z" fill="#5f7fae"/></svg>
<span class="t n" style="left:303.00px;top:39.10px;line-height:14px;font-size:12px;letter-spacing:-0.597px;"><u>T</u>ätigkeit</span>
<span class="t n" style="left:303.00px;top:64.10px;line-height:14px;font-size:12px;letter-spacing:-0.644px;">Telefon-Anruf</span>
<svg class="r" style="left:372px;top:68px" width="7" height="4" viewBox="0 0 7 4"><path d="M0.5 0h6L3.5 3.6z" fill="#5f7fae"/></svg>
<span class="t n" style="left:303.00px;top:89.10px;line-height:14px;font-size:12px;letter-spacing:-1.003px;">E-Mail</span>
<span class="t " style="left:418.00px;top:39.10px;line-height:14px;font-size:12px;letter-spacing:-0.597px;color:#a0a2aa;"><u>T</u>ätigkeit</span>
<span class="t " style="left:418.00px;top:64.10px;line-height:14px;font-size:12px;letter-spacing:-0.644px;color:#a0a2aa;">Telefon-Anruf</span>
<svg class="r" style="left:487px;top:68px" width="7" height="4" viewBox="0 0 7 4"><path d="M0.5 0h6L3.5 3.6z" fill="#9aa7bb"/></svg>
<span class="t " style="left:418.00px;top:89.10px;line-height:14px;font-size:12px;letter-spacing:-1.003px;color:#a0a2aa;">E-Mail</span>
<span class="t " style="left:521.50px;top:72.10px;line-height:14px;font-size:12px;letter-spacing:-0.781px;color:#a0a2aa;">als</span>
<span class="t " style="left:515.00px;top:88.10px;line-height:14px;font-size:12px;letter-spacing:-0.672px;color:#a0a2aa;">Klient</span>
<span class="t " style="left:563.50px;top:72.10px;line-height:14px;font-size:12px;letter-spacing:-0.781px;color:#a0a2aa;">als</span>
<span class="t " style="left:550.50px;top:88.10px;line-height:14px;font-size:12px;letter-spacing:-0.780px;color:#a0a2aa;">Zielfirma</span>
<span class="t " style="left:609.50px;top:72.10px;line-height:14px;font-size:12px;letter-spacing:-0.781px;color:#10227a;">als</span>
<span class="t " style="left:595.50px;top:88.10px;line-height:14px;font-size:12px;letter-spacing:-0.797px;color:#10227a;">Kandidat</span>
<span class="t " style="left:655.50px;top:72.10px;line-height:14px;font-size:12px;letter-spacing:-0.781px;color:#10227a;">als</span>
<span class="t " style="left:644.00px;top:88.10px;line-height:14px;font-size:12px;letter-spacing:-0.672px;color:#10227a;">Kontakt</span>
<div class="r " style="left:687px;top:38px;width:1px;height:63px;background:#a9c2e2;"></div>
<div class="r " style="left:688px;top:38px;width:1px;height:63px;background:#e4eefb;"></div>
<span class="t " style="left:696.50px;top:72.10px;line-height:14px;font-size:12px;letter-spacing:-0.545px;color:#10227a;">Duplikat</span>
<span class="t " style="left:692.50px;top:88.10px;line-height:14px;font-size:12px;letter-spacing:-0.572px;color:#10227a;">anlegen...</span>
<div class="r " style="left:746px;top:38px;width:1px;height:63px;background:#a9c2e2;"></div>
<div class="r " style="left:747px;top:38px;width:1px;height:63px;background:#e4eefb;"></div>
<span class="t " style="left:751.00px;top:72.10px;line-height:14px;font-size:12px;letter-spacing:-0.718px;color:#10227a;">hunterPROFILER</span>
<svg class="r" style="left:790px;top:96px" width="7" height="4" viewBox="0 0 7 4"><path d="M0.5 0h6L3.5 3.6z" fill="#5f7fae"/></svg>
<span class="t " style="left:852.00px;top:72.10px;line-height:14px;font-size:12px;letter-spacing:-1.227px;color:#10227a;"><u>F</u>irmen</span>
<svg class="r" style="left:864px;top:96px" width="7" height="4" viewBox="0 0 7 4"><path d="M0.5 0h6L3.5 3.6z" fill="#5f7fae"/></svg>
<span class="t " style="left:890.00px;top:72.10px;line-height:14px;font-size:12px;letter-spacing:-0.672px;color:#10227a;">Kontakte</span>
<span class="t " style="left:939.00px;top:72.10px;line-height:14px;font-size:12px;letter-spacing:-0.673px;color:#10227a;">Kandidaten</span>
<svg class="r" style="left:963px;top:96px" width="7" height="4" viewBox="0 0 7 4"><path d="M0.5 0h6L3.5 3.6z" fill="#5f7fae"/></svg>
<span class="t " style="left:998.50px;top:72.10px;line-height:14px;font-size:12px;letter-spacing:-0.520px;color:#10227a;"><u>T</u>ätigkeiten</span>
<svg class="r" style="left:1022px;top:96px" width="7" height="4" viewBox="0 0 7 4"><path d="M0.5 0h6L3.5 3.6z" fill="#5f7fae"/></svg>
<div class="r " style="left:1058px;top:38px;width:1px;height:63px;background:#a9c2e2;"></div>
<div class="r " style="left:1059px;top:38px;width:1px;height:63px;background:#e4eefb;"></div>
<span class="t " style="left:1063.00px;top:72.10px;line-height:14px;font-size:12px;letter-spacing:-0.718px;color:#10227a;">hunterPROFILER</span>
<div class="r " style="left:1162px;top:58px;width:58px;height:24px;background:linear-gradient(#fdd9a0 0,#fbc577 9px,#f9b040 10px,#fdd98c 100%);border:1px solid #b99a62;border-radius:3px;box-shadow:inset 0 0 0 1px rgba(255,240,200,.6);"></div>
<span class="t n" style="left:1184.00px;top:39.10px;line-height:14px;font-size:12px;letter-spacing:-0.743px;">Übersicht</span>
<span class="t n" style="left:1184.00px;top:64.10px;line-height:14px;font-size:12px;letter-spacing:-0.812px;">Details</span>
<span class="t n" style="left:1184.00px;top:89.10px;line-height:14px;font-size:12px;letter-spacing:-0.936px;">Zusammenfassung</span>
<span class="t n" style="left:1300.00px;top:52.10px;line-height:14px;font-size:12px;letter-spacing:-0.786px;"><u>S</u>uchen</span>
<span class="t n" style="left:1300.00px;top:77.10px;line-height:14px;font-size:12px;letter-spacing:-0.738px;">Übersicht immer sichtbar</span>
<div class="r " style="left:234px;top:135px;width:73px;height:25px;background:#dbe7f4;border-left:1px solid #f4f8fc;border-top:1px solid #f4f8fc;"></div>
<div class="r " style="left:12px;top:137px;width:222px;height:1px;background:#e2ebf6;"></div>
<div class="r " style="left:12px;top:158px;width:222px;height:1px;background:#e2ebf6;"></div>
<div class="r " style="left:307px;top:137px;width:391px;height:1px;background:#e2ebf6;"></div>
<div class="r " style="left:307px;top:158px;width:391px;height:1px;background:#e2ebf6;"></div>
<span class="t " style="left:17.00px;top:141.60px;line-height:14px;font-size:12px;letter-spacing:-0.706px;">Hauptdaten</span>
<span class="t " style="left:81.00px;top:141.60px;line-height:14px;font-size:12px;letter-spacing:-0.398px;">Meilensteine (0)</span>
<span class="t " style="left:167.00px;top:141.60px;line-height:14px;font-size:12px;letter-spacing:-0.335px;">Zielfirmen (0)</span>
<span class="t " style="left:241.00px;top:139.60px;line-height:14px;font-size:12px;letter-spacing:-0.531px;">Kontakte (0)</span>
<span class="t " style="left:310.00px;top:141.60px;line-height:14px;font-size:12px;letter-spacing:-0.363px;">Profil (0/9)</span>
<span class="t " style="left:371.00px;top:141.60px;line-height:14px;font-size:12px;letter-spacing:-0.335px;">Ziele (0)</span>
<span class="t " style="left:421.00px;top:141.60px;line-height:14px;font-size:12px;letter-spacing:-0.575px;">Dokumente (16)</span>
<span class="t " style="left:509.00px;top:141.60px;line-height:14px;font-size:12px;letter-spacing:-0.387px;">Vorselektion (3/148)</span>
<span class="t " style="left:618.00px;top:141.60px;line-height:14px;font-size:12px;letter-spacing:-0.551px;">Abrechnung (1)</span>
<div class="r " style="left:77px;top:137px;width:1px;height:22px;background:#000;"></div>
<div class="r " style="left:163px;top:137px;width:1px;height:22px;background:#000;"></div>
<div class="r " style="left:306px;top:137px;width:1px;height:22px;background:#000;"></div>
<div class="r " style="left:366px;top:137px;width:1px;height:22px;background:#000;"></div>
<div class="r " style="left:416px;top:137px;width:1px;height:22px;background:#000;"></div>
<div class="r " style="left:504px;top:137px;width:1px;height:22px;background:#000;"></div>
<div class="r " style="left:612px;top:137px;width:1px;height:22px;background:#000;"></div>
<div class="r " style="left:697px;top:137px;width:1px;height:22px;background:#000;"></div>
<div class="r " style="left:12px;top:167px;width:9px;height:1px;background:#555;"></div>
<span class="t " style="left:25.00px;top:160.60px;line-height:14px;font-size:12px;letter-spacing:-0.633px;">Projekt - Kontakte</span>
<div class="r " style="left:116px;top:167px;width:1302px;height:1px;background:#555;"></div>
<div class="r " style="left:39px;top:181px;width:380px;height:461px;background:#fff;border:1px solid #6e6e6e;border-bottom-width:2px;"></div>
<div class="r " style="left:40px;top:182px;width:378px;height:18px;background:#f0f0f0;border-top:1px solid #fff;"></div>
<div class="r " style="left:40px;top:200px;width:378px;height:1px;background:#8e8e8e;"></div>
<div class="r " style="left:59px;top:182px;width:1px;height:18px;background:#8e8e8e;"></div>
<div class="r " style="left:60px;top:182px;width:1px;height:18px;background:#fff;"></div>
<div class="r " style="left:139px;top:182px;width:1px;height:18px;background:#8e8e8e;"></div>
<div class="r " style="left:140px;top:182px;width:1px;height:18px;background:#fff;"></div>
<div class="r " style="left:219px;top:182px;width:1px;height:18px;background:#8e8e8e;"></div>
<div class="r " style="left:220px;top:182px;width:1px;height:18px;background:#fff;"></div>
<div class="r " style="left:299px;top:182px;width:1px;height:18px;background:#8e8e8e;"></div>
<div class="r " style="left:300px;top:182px;width:1px;height:18px;background:#fff;"></div>
<div class="r " style="left:379px;top:182px;width:1px;height:18px;background:#8e8e8e;"></div>
<div class="r " style="left:380px;top:182px;width:1px;height:18px;background:#fff;"></div>
<div class="r " style="left:40px;top:201px;width:378px;height:19px;background:#d9e6f4;"></div>
<div class="r " style="left:40px;top:201px;width:19px;height:19px;background:#f0f0f0;border-left:1px solid #fff;border-top:1px solid #fff;"></div>
<div class="r " style="left:59px;top:201px;width:1px;height:19px;background:#8e8e8e;"></div>
<div class="r " style="left:60px;top:219px;width:358px;height:1px;border-top:1px dotted #a0a0a0;"></div>
<div class="r " style="left:40px;top:220px;width:378px;height:1px;background:#6c6c6c;"></div>
<div class="r " style="left:139px;top:201px;width:1px;height:18px;border-left:1px dotted #a8a8a8;"></div>
<div class="r " style="left:219px;top:201px;width:1px;height:18px;border-left:1px dotted #a8a8a8;"></div>
<div class="r " style="left:299px;top:201px;width:1px;height:18px;border-left:1px dotted #a8a8a8;"></div>
<div class="r " style="left:379px;top:201px;width:1px;height:18px;border-left:1px dotted #a8a8a8;"></div>
<span class="t " style="left:67.50px;top:183.10px;line-height:14px;font-size:12px;letter-spacing:-0.560px;">Hauptkontakt</span>
<span class="t " style="left:153.50px;top:183.10px;line-height:14px;font-size:12px;letter-spacing:-0.879px;">Nachname</span>
<span class="t " style="left:238.00px;top:183.10px;line-height:14px;font-size:12px;letter-spacing:-1.004px;">Vorname</span>
<span class="t " style="left:310.50px;top:183.10px;line-height:14px;font-size:12px;letter-spacing:-0.700px;">Gespeichert</span>
<span class="t " style="left:412.00px;top:183.10px;line-height:14px;font-size:12px;">N</span>
<div class="r " style="left:93px;top:203px;width:13px;height:13px;background:linear-gradient(135deg,#dcdfe4,#fff 60%);border:1px solid #8a8a8a;box-shadow:inset 0 0 0 1px #f4f4f4;"><svg width="11" height="11" viewBox="0 0 11 11" style="display:block"><path d="M2.500 5.500l2.300 3L8.500 2" stroke="#4a5f9d" stroke-width="1.800" fill="none"/></svg></div>
<span class="t " style="left:143.00px;top:201.60px;line-height:14px;font-size:12px;letter-spacing:-0.088px;font-weight:700;">Schickel</span>
<span class="t " style="left:222.00px;top:201.60px;line-height:14px;font-size:12px;letter-spacing:-0.862px;">Gerhard</span>
<span class="t " style="left:303.00px;top:201.60px;line-height:14px;font-size:12px;letter-spacing:-0.075px;font-weight:700;">SCHICKEL,</span>
<div class="r " style="left:40px;top:625px;width:378px;height:15px;background:#f0f0f0;"></div>
<div class="r " style="left:57px;top:625px;width:89px;height:15px;background:#cdcdcd;"></div>
<svg class="r" style="left:40px;top:624.5px" width="16" height="16" viewBox="-8 -8 16 16"><path transform="rotate(180) scale(1.0)" d="M-1.700 -3.200L1.800 0L-1.700 3.200" stroke="#505050" stroke-width="2.100" fill="none"/></svg>
<svg class="r" style="left:401.5px;top:624.5px" width="16" height="16" viewBox="-8 -8 16 16"><path transform="rotate(0) scale(1.0)" d="M-1.700 -3.200L1.800 0L-1.700 3.200" stroke="#505050" stroke-width="2.100" fill="none"/></svg>
<div class="r " style="left:459px;top:181px;width:957px;height:334.5px;background:#fff;"></div>
<div class="r " style="left:1399px;top:181px;width:17px;height:334.5px;background:#f0f0f0;"></div>
<div class="r " style="left:1400px;top:215px;width:15px;height:15px;background:#cdcdcd;"></div>
<svg class="r" style="left:1399.5px;top:194.5px" width="16" height="16" viewBox="-8 -8 16 16"><path transform="rotate(270) scale(1.6)" d="M-1.700 -3.200L1.800 0L-1.700 3.200" stroke="#5a5a5a" stroke-width="1.750" fill="none"/></svg>
<svg class="r" style="left:1399.5px;top:484.5px" width="16" height="16" viewBox="-8 -8 16 16"><path transform="rotate(90) scale(1.6)" d="M-1.700 -3.200L1.800 0L-1.700 3.200" stroke="#5a5a5a" stroke-width="1.750" fill="none"/></svg>
<span class="t " style="left:462.00px;top:187.00px;line-height:15px;font-size:12px;letter-spacing:-0.107px;font-weight:700;">Schickel Gerhard</span>
<span class="t " style="left:461.00px;top:206.00px;line-height:15px;font-size:12px;letter-spacing:-0.003px;">Berater: GS - Günter Demo</span>
<span class="t " style="left:461.00px;top:221.00px;line-height:15px;font-size:12px;letter-spacing:0.003px;">zus. Berater: GS - Günter Demo, MW - Markus Weiland</span>
<div class="r " style="left:461px;top:235px;width:33px;height:15px;background:#00ff00;"></div>
<div class="r " style="left:499px;top:235px;width:41px;height:15px;background:#ff8080;"></div>
<span class="t " style="left:461.00px;top:236.00px;line-height:15px;font-size:12px;letter-spacing:0.128px;">Kand.</span>
<span class="t " style="left:493.00px;top:236.00px;line-height:15px;font-size:12px;">, </span>
<span class="t " style="left:499.00px;top:236.00px;line-height:15px;font-size:12px;letter-spacing:0.042px;">Kontakt</span>
<div class="r " style="left:461px;top:250px;width:46px;height:15px;background:#00ff80;"></div>
<span class="t " style="left:461.00px;top:251.00px;line-height:15px;font-size:12px;letter-spacing:-0.211px;">CV vorh.</span>
<div class="r " style="left:461px;top:267px;width:468px;height:15px;background:#dddde8;"></div>
<div class="r " style="left:461.5px;top:268px;width:11px;height:10.5px;background:#fff;border:1px solid #555;"></div>
<div class="r " style="left:464px;top:272px;width:6px;height:2px;background:#000;"></div>
<span class="t " style="left:473.00px;top:268.00px;line-height:15px;font-size:12px;letter-spacing:0.329px;">Kommunikation</span>
<span class="t " style="left:473.00px;top:284.00px;line-height:15px;font-size:12px;letter-spacing:0.097px;">Tel privat</span>
<span class="t " style="left:558.00px;top:284.00px;line-height:15px;font-size:12px;letter-spacing:0.194px;">06074 / 2345566</span>
<svg class="r" style="left:654px;top:283px;" width="12" height="11.5" viewBox="0 0 12 11.5"><use href="#bubble"/></svg>
<div class="r " style="left:473px;top:298px;width:456px;height:15px;background:#e4e4ec;"></div>
<span class="t " style="left:473.00px;top:299.00px;line-height:15px;font-size:12px;letter-spacing:-0.030px;">Mobil privat</span>
<span class="t " style="left:558.00px;top:299.00px;line-height:15px;font-size:12px;letter-spacing:0.325px;">01713457171</span>
<svg class="r" style="left:638px;top:298px;" width="12" height="11.5" viewBox="0 0 12 11.5"><use href="#bubble"/></svg>
<span class="t " style="left:473.00px;top:314.00px;line-height:15px;font-size:12px;letter-spacing:0.107px;">Mobil2</span>
<span class="t " style="left:558.00px;top:314.00px;line-height:15px;font-size:12px;letter-spacing:0.275px;">+49-123456789</span>
<svg class="r" style="left:649px;top:313px;" width="12" height="11.5" viewBox="0 0 12 11.5"><use href="#bubble"/></svg>
<div class="r " style="left:473px;top:328px;width:456px;height:16px;background:#e4e4ec;"></div>
<div class="r " style="left:473px;top:335px;width:456px;height:1px;background:#8c8c8c;"></div>
<span class="t " style="left:473.00px;top:345.00px;line-height:15px;font-size:12px;letter-spacing:0.069px;">Ass.1 - direkt</span>
<span class="t " style="left:558.00px;top:345.00px;line-height:15px;font-size:12px;letter-spacing:0.279px;">00800/77486837</span>
<svg class="r" style="left:655px;top:344px;" width="12" height="11.5" viewBox="0 0 12 11.5"><use href="#bubble"/></svg>
<div class="r " style="left:473px;top:359px;width:456px;height:16px;background:#e4e4ec;"></div>
<div class="r " style="left:473px;top:366px;width:456px;height:1px;background:#8c8c8c;"></div>
<span class="t " style="left:473.00px;top:376.00px;line-height:15px;font-size:12px;letter-spacing:-0.113px;">Fax Zentrale</span>
<span class="t " style="left:558.00px;top:376.00px;line-height:15px;font-size:12px;letter-spacing:0.201px;">+49-6707-574 18 98-82</span>
<div class="r " style="left:473px;top:390px;width:456px;height:15px;background:#e4e4ec;"></div>
<span class="t " style="left:473.00px;top:391.00px;line-height:15px;font-size:12px;letter-spacing:0.191px;">Tel Zentrale</span>
<span class="t " style="left:558.00px;top:391.00px;line-height:15px;font-size:12px;letter-spacing:0.195px;">+49-6707-574 18 98-0</span>
<svg class="r" style="left:684px;top:390px;" width="12" height="11.5" viewBox="0 0 12 11.5"><use href="#bubble"/></svg>
<span class="t " style="left:473.00px;top:406.00px;line-height:15px;font-size:12px;letter-spacing:0.053px;">Tel zusätzl.</span>
<span class="t " style="left:558.00px;top:406.00px;line-height:15px;font-size:12px;letter-spacing:0.297px;">069-1234454</span>
<svg class="r" style="left:635px;top:405px;" width="12" height="11.5" viewBox="0 0 12 11.5"><use href="#bubble"/></svg>
<div class="r " style="left:473px;top:420px;width:456px;height:15px;background:#e4e4ec;"></div>
<span class="t " style="left:473.00px;top:421.00px;line-height:15px;font-size:12px;letter-spacing:0.116px;">Email Zentrale</span>
<span class="t " style="left:558.00px;top:421.00px;line-height:15px;font-size:12px;letter-spacing:0.182px;">office@one-2-one.com</span>
<div class="r " style="left:461px;top:437px;width:468px;height:15px;background:#dddde8;"></div>
<div class="r " style="left:461.5px;top:438px;width:11px;height:10.5px;background:#fff;border:1px solid #555;"></div>
<div class="r " style="left:464px;top:442px;width:6px;height:2px;background:#000;"></div>
<span class="t " style="left:473.00px;top:438.00px;line-height:15px;font-size:12px;letter-spacing:0.093px;">akt. Dienstverhältnis</span>
<span class="t " style="left:473.00px;top:454.00px;line-height:15px;font-size:12px;letter-spacing:-0.056px;">2013-04 - lfd., <b>ONE-2-ONE (70281 Lahr)</b></span>
<span class="t " style="left:473.00px;top:469.00px;line-height:15px;font-size:12px;letter-spacing:-0.034px;"><b>Head of Finance</b>, Finanzabteilung</span>
<span class="t " style="left:473.00px;top:484.00px;line-height:15px;font-size:12px;letter-spacing:0.123px;">21 (Sales Gesamt), 2 (Sales &amp; Marketing), BRL (Bereichsleiter), R</span>
<span class="t " style="left:473.00px;top:499.00px;line-height:15px;font-size:12px;letter-spacing:0.088px;">(Personalberatung), Z (IT)</span>
<div class="r " style="left:461px;top:514.5px;width:12px;height:1px;background:#555;"></div>
<div class="r " style="left:942px;top:185px;width:280px;height:15px;background:#dddde8;"></div>
<div class="r " style="left:941.5px;top:186px;width:11px;height:10.5px;background:#fff;border:1px solid #555;"></div>
<div class="r " style="left:944px;top:190px;width:6px;height:2px;background:#000;"></div>
<span class="t " style="left:953.00px;top:186.00px;line-height:15px;font-size:12px;letter-spacing:0.288px;">Sprachkenntnisse</span>
<div class="r " style="left:953px;top:216px;width:269px;height:15px;background:#e4e4ec;"></div>
<div class="r " style="left:953px;top:246px;width:269px;height:15px;background:#e4e4ec;"></div>
<div class="r " style="left:953px;top:276px;width:269px;height:30px;background:#e4e4ec;"></div>
<div class="r " style="left:953px;top:321px;width:269px;height:15px;background:#e4e4ec;"></div>
<span class="t " style="left:953.00px;top:202.00px;line-height:15px;font-size:12px;letter-spacing:0.156px;">Spanisch - verhandlungsfähig, Gewichtung: 90</span>
<span class="t " style="left:953.00px;top:217.00px;line-height:15px;font-size:12px;letter-spacing:0.156px;">Spanisch - verhandlungsfähig, Gewichtung: 90</span>
<span class="t " style="left:953.00px;top:232.00px;line-height:15px;font-size:12px;letter-spacing:0.156px;">Spanisch - verhandlungsfähig, Gewichtung: 90</span>
<span class="t " style="left:953.00px;top:247.00px;line-height:15px;font-size:12px;letter-spacing:0.156px;">Englisch - verhandlungsfähig, Gewichtung: 90</span>
<span class="t " style="left:953.00px;top:262.00px;line-height:15px;font-size:12px;letter-spacing:0.144px;">Deutsch - verhandlungsfähig, Gewichtung: 44</span>
<span class="t " style="left:953.00px;top:277.00px;line-height:15px;font-size:12px;letter-spacing:0.144px;">Spanisch - korrespondenzfähig, Gewichtung: 66</span>
<span class="t " style="left:953.00px;top:292.00px;line-height:15px;font-size:12px;letter-spacing:0.006px;">skillProficiency = INTERMEDIATE</span>
<span class="t " style="left:953.00px;top:307.00px;line-height:15px;font-size:12px;letter-spacing:0.177px;">Englisch - vertragssicher, Gewichtung: 114</span>
<span class="t " style="left:953.00px;top:322.00px;line-height:15px;font-size:12px;letter-spacing:0.177px;">Englisch - vertragssicher, Gewichtung: 114</span>
<span class="t " style="left:953.00px;top:337.00px;line-height:15px;font-size:12px;letter-spacing:0.177px;">Englisch - vertragssicher, Gewichtung: 114</span>
<div class="r " style="left:942px;top:353px;width:280px;height:15px;background:#dddde8;"></div>
<div class="r " style="left:941.5px;top:354px;width:11px;height:10.5px;background:#fff;border:1px solid #555;"></div>
<div class="r " style="left:944px;top:358px;width:6px;height:2px;background:#000;"></div>
<span class="t " style="left:953.00px;top:354.00px;line-height:15px;font-size:12px;letter-spacing:0.362px;">Kenntnisse</span>
<div class="r " style="left:953px;top:399px;width:269px;height:30px;background:#e4e4ec;"></div>
<div class="r " style="left:953px;top:459px;width:269px;height:30px;background:#e4e4ec;"></div>
<span class="t " style="left:953.00px;top:370.00px;line-height:15px;font-size:12px;letter-spacing:0.110px;">Grundkenntnisse, 23 Monat(e), Gewichtung: 34</span>
<span class="t " style="left:953.00px;top:385.00px;line-height:15px;font-size:12px;letter-spacing:-0.076px;">Architekt</span>
<span class="t " style="left:953.00px;top:400.00px;line-height:15px;font-size:12px;letter-spacing:0.110px;">Grundkenntnisse, 47 Monat(e), Gewichtung: 39</span>
<span class="t " style="left:953.00px;top:415.00px;line-height:15px;font-size:12px;letter-spacing:0.163px;">Basel Capital Accord</span>
<span class="t " style="left:953.00px;top:430.00px;line-height:15px;font-size:12px;letter-spacing:0.110px;">Grundkenntnisse, 35 Monat(e), Gewichtung: 36</span>
<span class="t " style="left:953.00px;top:445.00px;line-height:15px;font-size:12px;letter-spacing:0.268px;">Bereich Presales</span>
<span class="t " style="left:953.00px;top:460.00px;line-height:15px;font-size:12px;letter-spacing:0.320px;">18</span>
<span class="t " style="left:953.00px;top:475.00px;line-height:15px;font-size:12px;letter-spacing:0.208px;">Business Continuity Management</span>
<span class="t " style="left:953.00px;top:490.00px;line-height:15px;font-size:12px;letter-spacing:0.110px;">Grundkenntnisse, 23 Monat(e), Gewichtung: 34</span>
<span class="t " style="left:953.00px;top:505.00px;line-height:15px;font-size:12px;letter-spacing:-0.254px;">COM+</span>
<span class="t " style="left:1305.00px;top:191.00px;line-height:15px;font-size:12px;letter-spacing:0.138px;"><u>Konfiguration </u></span>
<div class="r " style="left:1236px;top:222px;width:161px;height:15px;background:#dddde8;"></div>
<div class="r " style="left:1235.5px;top:223px;width:11px;height:10.5px;background:#fff;border:1px solid #555;"></div>
<div class="r " style="left:1238px;top:227px;width:6px;height:2px;background:#000;"></div>
<span class="t " style="left:1247.00px;top:223.00px;line-height:15px;font-size:12px;letter-spacing:-0.004px;">Foto</span>
<svg class="r" style="left:1247px;top:238px" width="150" height="197" viewBox="0 0 150 197">
<defs>
<linearGradient id="pbg" x1="0" y1="0" x2="1" y2="0"><stop offset="0" stop-color="#e3e0dd"/><stop offset=".3" stop-color="#efedeb"/><stop offset="1" stop-color="#f3f2f0"/></linearGradient>
<radialGradient id="pskin" cx=".42" cy=".32" r=".8"><stop offset="0" stop-color="#efcdb8"/><stop offset=".4" stop-color="#e0b097"/><stop offset=".75" stop-color="#d09a80"/><stop offset="1" stop-color="#b88268"/></radialGradient>
<linearGradient id="phand" x1="0" y1="0" x2="1" y2="1"><stop offset="0" stop-color="#e8bca4"/><stop offset=".6" stop-color="#d8a48a"/><stop offset="1" stop-color="#c08a70"/></linearGradient>
<linearGradient id="psuit" x1="0" y1="0" x2="1" y2="1"><stop offset="0" stop-color="#3c3a3a"/><stop offset="1" stop-color="#222122"/></linearGradient>
<linearGradient id="ptie" x1="0" y1="0" x2="1" y2="0"><stop offset="0" stop-color="#f0d890"/><stop offset=".45" stop-color="#e4c060"/><stop offset="1" stop-color="#f6e8b0"/></linearGradient>
<filter id="pblur" x="-5%" y="-5%" width="110%" height="110%"><feGaussianBlur stdDeviation="1"/></filter>
<filter id="pblur3" x="-10%" y="-10%" width="120%" height="120%"><feGaussianBlur stdDeviation="2.500"/></filter>
<clipPath id="pclip"><rect width="150" height="197"/></clipPath>
</defs>
<g clip-path="url(#pclip)">
<rect width="150" height="197" fill="url(#pbg)"/>
<rect x="0" y="150" width="30" height="47" fill="#d8d5d2" filter="url(#pblur3)"/>
<g filter="url(#pblur)">
<!-- suit right -->
<path d="M123 110 L138 120 L150 128 L150 197 L60 197 L88 176 Z" fill="url(#psuit)"/>
<!-- suit left -->
<path d="M57 137 L68 146 L70 197 L0 197 L0 166 L14 158 L30 170 L50 150 Z" fill="#2c2a2b"/>
<!-- neck -->
<path d="M60 104 L110 100 L114 118 L84 140 L66 134 Z" fill="#c8967c"/>
<!-- shirt -->
<path d="M66 134 L82 142 L117 109 L124 121 L110 152 L91 174 L78 176 L68 150 Z" fill="#fbfbfb"/>
<path d="M66 134 L82 142 L70 160 L67 150 Z" fill="#e6e8ee"/>
<!-- vest -->
<path d="M64 150 L72 160 L70 197 L62 197 Z" fill="#252425"/>
<path d="M88 197 L92 172 L110 152 L118 176 L106 197 Z" fill="#2a2829"/>
<!-- lapel right -->
<path d="M122 118 L138 142 L128 160 L132 166 L106 197 L94 197 L110 152 Z" fill="#262425"/>
<!-- tie -->
<path d="M72 146 L82 142 L86 152 L89 172 L78 197 L70 197 L68 170 Z" fill="url(#ptie)"/>
<path d="M70 164 l16 -8 M69 177 l19 -9 M70 190 l13 -7" stroke="#fdf6dc" stroke-width="3" opacity=".75"/>
<!-- ear -->
<ellipse cx="113.500" cy="69" rx="5.500" ry="14" fill="#d09880"/>
<!-- hair sides -->
<path d="M84 12 C100 14 114 26 116 52 L113 58 L106 56 C106 40 100 24 84 12 Z" fill="#86684f"/>
<path d="M40 30 C35 38 33 52 35 62 L40 60 C39 48 42 38 47 28 Z" fill="#8a6c54"/>
<!-- head -->
<path d="M74 14 C96 14 109 32 109 58 C110 88 98 120 79 121.500 C60 122 40 100 37 68 C34 38 50 14 74 14 Z" fill="url(#pskin)"/>
<!-- wispy top hair -->
<path d="M42 24 C52 10 84 6 104 22 C90 12 58 12 42 24 Z" fill="#a89078" opacity=".75"/>
<!-- forehead highlight -->
<ellipse cx="70" cy="36" rx="25" ry="14" fill="#f4dccc" opacity=".8"/>
<!-- cheek shading -->
<ellipse cx="97" cy="86" rx="9" ry="18" fill="#c08468" opacity=".45"/>
<ellipse cx="46" cy="84" rx="6" ry="14" fill="#c88c70" opacity=".4"/>
<!-- brows & eyes -->
<path d="M45 62 q8 -4 15 -1" stroke="#a8846a" stroke-width="1.600" fill="none"/>
<path d="M74 55 q9 -4 17 0" stroke="#a8846a" stroke-width="1.600" fill="none"/>
<ellipse cx="52.500" cy="68.500" rx="4.500" ry="2" fill="#7a8490"/>
<ellipse cx="82" cy="62" rx="5" ry="2" fill="#7a8490"/>
<ellipse cx="52.500" cy="66.500" rx="6.500" ry="1.100" fill="#8a6048"/>
<ellipse cx="82" cy="60" rx="7" ry="1.100" fill="#8a6048"/>
<!-- nose -->
<path d="M63 64 C60 74 58 82 61 86 L73 86 C75 82 71 74 69 64 Z" fill="#dca88e" opacity=".8"/>
<ellipse cx="66.500" cy="86" rx="6.500" ry="1.800" fill="#b07a60" opacity=".7"/>
<!-- mustache -->
<path d="M54 93 C60 86 74 84 90 89 L89 94 C77 90 65 91 56 96 Z" fill="#8e6a52"/>
<!-- mouth -->
<path d="M62 96 C69 93 78 92.500 85 94 C82 100 70 102 62 96 Z" fill="#f0e2d0"/>
<path d="M61 96 C69 104 80 103 86 94" stroke="#a86454" stroke-width="1.500" fill="none"/>
<!-- jaw shadow -->
<path d="M54 108 C64 122 88 121 100 104" stroke="#b88268" stroke-width="3" fill="none" opacity=".5"/>
<!-- phone upper -->
<path d="M30 67 L41 66 L43 100 L55 130 L50 136 L34 134 L31 110 Z" fill="#2b2b31"/>
<path d="M32.500 69 L36 68.500 L38.500 100 L34 100 Z" fill="#4c4c56"/>
<!-- hand -->
<path d="M22 108 C26 100 34 100 38 106 L40 112 L34 116 L36 134 L52 136 L54 150 C54 162 48 172 42 180 L36 190 L12 184 L16 156 C10 140 14 120 22 108 Z" fill="url(#phand)"/>
<!-- fingers over phone -->
<path d="M26 112 C36 106 48 110 54 118 L55 124 C46 118 36 118 26 124 Z" fill="#e6b8a0"/>
<path d="M20 126 C32 118 48 122 55 130 L54 138 C46 132 32 130 20 138 Z" fill="#deae94"/>
<path d="M16 140 C24 134 34 134 40 138 L38 148 C32 144 24 144 16 150 Z" fill="#d8a68c"/>
<!-- phone lower -->
<path d="M33 140 L46 142 L45 152 L35 150 Z" fill="#2e2e34"/>
<!-- cord -->
<path d="M0 160 q2 -5 4 -1 q2 -6 4 -2 q2 -6 4 -2 q2 -6 4 -2 q2 -5 4 -1 q3 -3 5 -1" stroke="#2e2e32" stroke-width="2.400" fill="none"/>
<!-- cuff -->
<path d="M11 184 L36 190 L35 197 L10 197 Z" fill="#f6f6f8"/>
</g>
</g>
</svg>
<div class="r " style="left:459px;top:520.5px;width:957px;height:24px;background:#f0f0f0;"></div>
<div class="r " style="left:460px;top:520.5px;width:99px;height:24px;background:#f4f4f4;border-left:1px solid #fff;border-top:1px solid #fff;"></div>
<svg class="r" style="left:467px;top:523px;" width="16" height="16" viewBox="0 0 16 16"><use href="#wx"/></svg>
<span class="t " style="left:489.00px;top:524.50px;line-height:16px;font-size:13.33px;letter-spacing:-0.217px;">www privat</span>
<svg class="r" style="left:564px;top:525px;" width="16" height="16" viewBox="0 0 16 16"><use href="#wc"/></svg>
<span class="t " style="left:586.00px;top:525.50px;line-height:16px;font-size:13.33px;letter-spacing:-0.630px;">www</span>
<svg class="r" style="left:625px;top:525px;" width="16" height="16" viewBox="0 0 16 16"><use href="#wx"/></svg>
<span class="t " style="left:647.00px;top:525.50px;line-height:16px;font-size:13.33px;letter-spacing:-0.172px;">Xing</span>
<svg class="r" style="left:685px;top:525px;" width="16" height="16" viewBox="0 0 16 16"><use href="#wc"/></svg>
<span class="t " style="left:707.00px;top:525.50px;line-height:16px;font-size:13.33px;letter-spacing:-0.049px;">LinkedIn</span>
<svg class="r" style="left:769px;top:525px;" width="16" height="16" viewBox="0 0 16 16"><use href="#wx"/></svg>
<span class="t " style="left:791.00px;top:525.50px;line-height:16px;font-size:13.33px;letter-spacing:0.432px;">Facebook</span>
<svg class="r" style="left:865px;top:525px;" width="16" height="16" viewBox="0 0 16 16"><use href="#wx"/></svg>
<span class="t " style="left:887.00px;top:525.50px;line-height:16px;font-size:13.33px;letter-spacing:-0.060px;">StudiVZ</span>
<svg class="r" style="left:946px;top:525px;" width="16" height="16" viewBox="0 0 16 16"><use href="#wc"/></svg>
<span class="t " style="left:968.00px;top:525.50px;line-height:16px;font-size:13.33px;letter-spacing:0.071px;">Such-Ergebnis-Vorschau</span>
<div class="r " style="left:559px;top:522px;width:1px;height:22px;background:#484848;"></div>
<div class="r " style="left:560px;top:523px;width:1px;height:21px;background:#b4b4b4;"></div>
<div class="r " style="left:618px;top:523px;width:1px;height:21px;background:#484848;"></div>
<div class="r " style="left:619px;top:523px;width:1px;height:21px;background:#b4b4b4;"></div>
<div class="r " style="left:678px;top:523px;width:1px;height:21px;background:#484848;"></div>
<div class="r " style="left:679px;top:523px;width:1px;height:21px;background:#b4b4b4;"></div>
<div class="r " style="left:762px;top:523px;width:1px;height:21px;background:#484848;"></div>
<div class="r " style="left:763px;top:523px;width:1px;height:21px;background:#b4b4b4;"></div>
<div class="r " style="left:858px;top:523px;width:1px;height:21px;background:#484848;"></div>
<div class="r " style="left:859px;top:523px;width:1px;height:21px;background:#b4b4b4;"></div>
<div class="r " style="left:939px;top:523px;width:1px;height:21px;background:#484848;"></div>
<div class="r " style="left:940px;top:523px;width:1px;height:21px;background:#b4b4b4;"></div>
<div class="r " style="left:1122px;top:523px;width:1px;height:21px;background:#484848;"></div>
<div class="r " style="left:1123px;top:523px;width:1px;height:21px;background:#b4b4b4;"></div>
<div class="r " style="left:459px;top:544.5px;width:957px;height:97.5px;background:#fff;border-right:2px solid #707070;border-bottom:2px solid #707070;border-left:2px solid #e8e8e8;"></div>
<div class="r " style="left:1395px;top:545px;width:19px;height:95px;background:#f8f8f8;"></div>
<svg class="r" style="left:1395.5px;top:558.5px" width="16" height="16" viewBox="-8 -8 16 16"><path transform="rotate(270) scale(1.6)" d="M-1.700 -3.200L1.800 0L-1.700 3.200" stroke="#c4c4c4" stroke-width="1.750" fill="none"/></svg>
<svg class="r" style="left:1395.5px;top:608.5px" width="16" height="16" viewBox="-8 -8 16 16"><path transform="rotate(90) scale(1.6)" d="M-1.700 -3.200L1.800 0L-1.700 3.200" stroke="#c4c4c4" stroke-width="1.750" fill="none"/></svg>
<div class="r " style="left:39px;top:643px;width:1377px;height:3px;background:repeating-conic-gradient(#111 0 25%,#fff 0 50%) 0 0/2px 2px;"></div>
<div class="r " style="left:39px;top:646px;width:1377px;height:138px;background:#fff;border:1px solid #646464;"></div>
<div class="r " style="left:40px;top:647px;width:1375px;height:20px;background:#f0f0f0;border-bottom:2px solid #6a6a6a;border-top:1px solid #fff;"></div>
<div class="r " style="left:59px;top:647px;width:1px;height:18px;background:#8e8e8e;"></div>
<div class="r " style="left:60px;top:647px;width:1px;height:18px;background:#fff;"></div>
<div class="r " style="left:88px;top:647px;width:1px;height:18px;background:#8e8e8e;"></div>
<div class="r " style="left:89px;top:647px;width:1px;height:18px;background:#fff;"></div>
<span class="t " style="left:63.50px;top:648.10px;line-height:14px;font-size:12px;letter-spacing:-1.069px;">Prior</span>
<div class="r " style="left:154px;top:647px;width:1px;height:18px;background:#8e8e8e;"></div>
<div class="r " style="left:155px;top:647px;width:1px;height:18px;background:#fff;"></div>
<span class="t " style="left:102.00px;top:648.10px;line-height:14px;font-size:12px;letter-spacing:-0.502px;">Aktivität</span>
<div class="r " style="left:204px;top:647px;width:1px;height:18px;background:#8e8e8e;"></div>
<div class="r " style="left:205px;top:647px;width:1px;height:18px;background:#fff;"></div>
<span class="t " style="left:164.20px;top:648.10px;line-height:14px;font-size:12px;letter-spacing:-0.789px;">Status</span>
<div class="r " style="left:253px;top:647px;width:1px;height:18px;background:#8e8e8e;"></div>
<div class="r " style="left:254px;top:647px;width:1px;height:18px;background:#fff;"></div>
<span class="t " style="left:212.40px;top:648.10px;line-height:14px;font-size:12px;letter-spacing:-0.823px;">Berater</span>
<div class="r " style="left:333px;top:647px;width:1px;height:18px;background:#8e8e8e;"></div>
<div class="r " style="left:334px;top:647px;width:1px;height:18px;background:#fff;"></div>
<span class="t " style="left:279.40px;top:648.10px;line-height:14px;font-size:12px;letter-spacing:-0.849px;">Start</span>
<div class="r " style="left:329px;top:648px;width:5px;height:5px;background:#800000;"></div>
<div class="r " style="left:413px;top:647px;width:1px;height:18px;background:#8e8e8e;"></div>
<div class="r " style="left:414px;top:647px;width:1px;height:18px;background:#fff;"></div>
<span class="t " style="left:357.40px;top:648.10px;line-height:14px;font-size:12px;letter-spacing:-1.158px;">Ende</span>
<div class="r " style="left:409px;top:648px;width:5px;height:5px;background:#800000;"></div>
<div class="r " style="left:493px;top:647px;width:1px;height:18px;background:#8e8e8e;"></div>
<div class="r " style="left:494px;top:647px;width:1px;height:18px;background:#fff;"></div>
<span class="t " style="left:427.30px;top:648.10px;line-height:14px;font-size:12px;letter-spacing:-0.854px;">Nachname</span>
<div class="r " style="left:573px;top:647px;width:1px;height:18px;background:#8e8e8e;"></div>
<div class="r " style="left:574px;top:647px;width:1px;height:18px;background:#fff;"></div>
<span class="t " style="left:512.00px;top:648.10px;line-height:14px;font-size:12px;letter-spacing:-0.890px;">Vorname</span>
<div class="r " style="left:653px;top:647px;width:1px;height:18px;background:#8e8e8e;"></div>
<div class="r " style="left:654px;top:647px;width:1px;height:18px;background:#fff;"></div>
<span class="t " style="left:584.40px;top:648.10px;line-height:14px;font-size:12px;letter-spacing:-0.718px;">Gespeichert</span>
<div class="r " style="left:696px;top:647px;width:1px;height:18px;background:#8e8e8e;"></div>
<div class="r " style="left:697px;top:647px;width:1px;height:18px;background:#fff;"></div>
<span class="t " style="left:668.00px;top:648.10px;line-height:14px;font-size:12px;letter-spacing:-1.057px;">Plz</span>
<div class="r " style="left:778px;top:647px;width:1px;height:18px;background:#8e8e8e;"></div>
<div class="r " style="left:779px;top:647px;width:1px;height:18px;background:#fff;"></div>
<span class="t " style="left:725.00px;top:648.10px;line-height:14px;font-size:12px;letter-spacing:-1.334px;">Firma</span>
<div class="r " style="left:858px;top:647px;width:1px;height:18px;background:#8e8e8e;"></div>
<div class="r " style="left:859px;top:647px;width:1px;height:18px;background:#fff;"></div>
<span class="t " style="left:789.30px;top:648.10px;line-height:14px;font-size:12px;letter-spacing:-0.582px;">Tätigkeits -</span>
<div class="r " style="left:854px;top:648px;width:5px;height:5px;background:#800000;"></div>
<div class="r " style="left:938px;top:647px;width:1px;height:18px;background:#8e8e8e;"></div>
<div class="r " style="left:939px;top:647px;width:1px;height:18px;background:#fff;"></div>
<span class="t " style="left:888.30px;top:648.10px;line-height:14px;font-size:12px;letter-spacing:0.062px;">n.v.</span>
<div class="r " style="left:1018px;top:647px;width:1px;height:18px;background:#8e8e8e;"></div>
<div class="r " style="left:1019px;top:647px;width:1px;height:18px;background:#fff;"></div>
<span class="t " style="left:968.30px;top:648.10px;line-height:14px;font-size:12px;letter-spacing:0.062px;">n.v.</span>
<div class="r " style="left:1098px;top:647px;width:1px;height:18px;background:#8e8e8e;"></div>
<div class="r " style="left:1099px;top:647px;width:1px;height:18px;background:#fff;"></div>
<span class="t " style="left:1048.30px;top:648.10px;line-height:14px;font-size:12px;letter-spacing:0.062px;">n.v.</span>
<div class="r " style="left:1178px;top:647px;width:1px;height:18px;background:#8e8e8e;"></div>
<div class="r " style="left:1179px;top:647px;width:1px;height:18px;background:#fff;"></div>
<span class="t " style="left:1128.30px;top:648.10px;line-height:14px;font-size:12px;letter-spacing:0.062px;">n.v.</span>
<div class="r " style="left:1258px;top:647px;width:1px;height:18px;background:#8e8e8e;"></div>
<div class="r " style="left:1259px;top:647px;width:1px;height:18px;background:#fff;"></div>
<span class="t " style="left:1184.00px;top:648.10px;line-height:14px;font-size:12px;letter-spacing:-0.809px;">zus. Datum 1</span>
<div class="r " style="left:1254px;top:648px;width:5px;height:5px;background:#800000;"></div>
<div class="r " style="left:1338px;top:647px;width:1px;height:18px;background:#8e8e8e;"></div>
<div class="r " style="left:1339px;top:647px;width:1px;height:18px;background:#fff;"></div>
<span class="t " style="left:1285.60px;top:648.10px;line-height:14px;font-size:12px;letter-spacing:0.062px;">n.v.</span>
<div class="r " style="left:1334px;top:648px;width:5px;height:5px;background:#800000;"></div>
<span class="t " style="left:1360.00px;top:648.10px;line-height:14px;font-size:12px;letter-spacing:-0.896px;">Anhang</span>
<div class="r " style="left:40px;top:767px;width:1375px;height:16px;background:#f0f0f0;"></div>
<div class="r " style="left:57px;top:767px;width:1337px;height:16px;background:#cdcdcd;"></div>
<svg class="r" style="left:40px;top:767px" width="16" height="16" viewBox="-8 -8 16 16"><path transform="rotate(180) scale(1.0)" d="M-1.700 -3.200L1.800 0L-1.700 3.200" stroke="#505050" stroke-width="2.100" fill="none"/></svg>
<svg class="r" style="left:1398px;top:767px" width="16" height="16" viewBox="-8 -8 16 16"><path transform="rotate(0) scale(1.0)" d="M-1.700 -3.200L1.800 0L-1.700 3.200" stroke="#505050" stroke-width="2.100" fill="none"/></svg>
<div class="r " style="left:6px;top:790px;width:1422px;height:1px;background:#e6e4e2;"></div>
<div class="r " style="left:6px;top:791px;width:1422px;height:1px;background:#fff;"></div>
<div class="r " style="left:6px;top:792px;width:1422px;height:1px;background:#5a82bc;"></div>
<div class="r " style="left:6px;top:793px;width:1422px;height:1px;background:#fff;"></div>
<div class="r " style="left:6px;top:794px;width:1422px;height:19px;background:linear-gradient(#d7e6fa 0,#c9dcf8 5px,#b0cbf2 6px,#b4cef3 8px,#c4d9f7 13px,#d8e5f8 19px);"></div>
<div class="r " style="left:1206px;top:794px;width:222px;height:19px;background:linear-gradient(#cfe0f9 0,#b4cff3 45%,#8fb2e2 75%,#7a9dd2 100%);border-left:1px solid #eef4fd;"></div>
<span class="t n" style="left:9.00px;top:796.60px;line-height:14px;font-size:12px;letter-spacing:-1.060px;">Bereit</span>
<div class="r " style="left:1206px;top:796px;width:203px;height:14px;background:linear-gradient(#d3d8e4,#e6eaf2 50%,#e0e5ee);border:1px solid #fff;border-radius:2px;box-shadow:inset 0 0 0 1px #7aa0d8;"></div>
<div class="r " style="left:1410px;top:793px;width:2px;height:20px;background:#e8f0fb;"></div>
<svg class="r" style="left:1416px;top:801px" width="12" height="12" viewBox="0 0 12 12"><g fill="#4a6492"><rect x="8" y="1" width="2" height="2"/><rect x="4" y="5" width="2" height="2"/><rect x="8" y="5" width="2" height="2"/><rect x="0" y="9" width="2" height="2"/><rect x="4" y="9" width="2" height="2"/><rect x="8" y="9" width="2" height="2"/></g></svg>
<svg class="r" style="left:9px;top:-19px" width="38" height="38" viewBox="0 0 40 40"><use href="#orb"/></svg>
<span class="t " style="left:17.00px;top:-0.50px;line-height:12px;font-size:11px;letter-spacing:-1.206px;color:#fff;font-weight:700;">hunter</span>
<svg class="r" style="left:64px;top:8px;" width="16" height="16" viewBox="0 0 16 16"><use href="#i_house"/></svg>
<svg class="r" style="left:140px;top:8px;" width="16" height="16" viewBox="0 0 16 16"><use href="#i_person_r"/></svg>
<svg class="r" style="left:228px;top:8px;" width="16" height="16" viewBox="0 0 16 16"><use href="#i_box"/></svg>
<svg class="r" style="left:312px;top:8px;" width="16" height="16" viewBox="0 0 16 16"><use href="#i_pencil"/></svg>
<svg class="r" style="left:411px;top:8px;" width="16" height="16" viewBox="0 0 16 16"><use href="#i_tree"/></svg>
<svg class="r" style="left:568px;top:8px;" width="16" height="16" viewBox="0 0 16 16"><use href="#i_win"/></svg>
<svg class="r" style="left:1078px;top:8px;" width="16" height="16" viewBox="0 0 16 16"><use href="#i_compass"/></svg>
<svg class="r" style="left:1100px;top:8px;" width="16" height="16" viewBox="0 0 16 16"><use href="#i_chart"/></svg>
<svg class="r" style="left:1128px;top:8px;" width="16" height="16" viewBox="0 0 16 16"><use href="#i_jc"/></svg>
<svg class="r" style="left:1160px;top:8px;" width="16" height="16" viewBox="0 0 16 16"><use href="#i_mailclock"/></svg>
<svg class="r" style="left:1192px;top:8px;" width="16" height="16" viewBox="0 0 16 16"><use href="#i_search"/></svg>
<svg class="r" style="left:1230px;top:8px;" width="16" height="16" viewBox="0 0 16 16"><use href="#i_s"/></svg>
<svg class="r" style="left:1268px;top:8px;" width="16" height="16" viewBox="0 0 16 16"><use href="#i_clock_g"/></svg>
<svg class="r" style="left:1300px;top:8px;" width="16" height="16" viewBox="0 0 16 16"><use href="#i_clock_d"/></svg>
<svg class="r" style="left:1329.5px;top:8px;" width="16" height="16" viewBox="0 0 16 16"><use href="#i_help"/></svg>
<svg class="r" style="left:18px;top:37px;" width="16" height="16" viewBox="0 0 16 16"><use href="#i_new_d"/></svg>
<svg class="r" style="left:18px;top:62px;" width="16" height="16" viewBox="0 0 16 16"><use href="#i_save"/></svg>
<svg class="r" style="left:18px;top:87px;" width="16" height="16" viewBox="0 0 16 16"><use href="#i_del"/></svg>
<svg class="r" style="left:99px;top:37px;" width="16" height="16" viewBox="0 0 16 16"><use href="#i_search"/></svg>
<svg class="r" style="left:99px;top:62px;" width="16" height="16" viewBox="0 0 16 16"><use href="#i_print"/></svg>
<svg class="r" style="left:99px;top:87px;" width="16" height="16" viewBox="0 0 16 16"><use href="#i_refresh"/></svg>
<svg class="r" style="left:192px;top:37px;" width="16" height="16" viewBox="0 0 16 16"><use href="#i_prev"/></svg>
<svg class="r" style="left:192px;top:62px;" width="16" height="16" viewBox="0 0 16 16"><use href="#i_next"/></svg>
<svg class="r" style="left:192px;top:87px;" width="16" height="16" viewBox="0 0 16 16"><use href="#i_pages"/></svg>
<svg class="r" style="left:284px;top:37px;" width="16" height="16" viewBox="0 0 16 16"><use href="#i_pencil"/></svg>
<svg class="r" style="left:284px;top:62px;" width="16" height="16" viewBox="0 0 16 16"><use href="#i_tel"/></svg>
<svg class="r" style="left:284px;top:87px;" width="16" height="16" viewBox="0 0 16 16"><use href="#i_mail"/></svg>
<svg class="r" style="left:399px;top:37px;" width="16" height="16" viewBox="0 0 16 16"><use href="#i_pencil_d"/></svg>
<svg class="r" style="left:399px;top:62px;" width="16" height="16" viewBox="0 0 16 16"><use href="#i_tel_d"/></svg>
<svg class="r" style="left:399px;top:87px;" width="16" height="16" viewBox="0 0 16 16"><use href="#i_mail_d"/></svg>
<svg class="r" style="left:514px;top:35px;" width="32" height="32" viewBox="0 0 32 32"><use href="#b_house_d"/></svg>
<svg class="r" style="left:555px;top:35px;" width="32" height="32" viewBox="0 0 32 32"><use href="#b_house_d"/></svg>
<svg class="r" style="left:602px;top:35px;" width="32" height="32" viewBox="0 0 32 32"><use href="#b_person_g"/></svg>
<svg class="r" style="left:647px;top:35px;" width="32" height="32" viewBox="0 0 32 32"><use href="#b_person_b"/></svg>
<svg class="r" style="left:700px;top:35px;" width="32" height="32" viewBox="0 0 32 32"><use href="#b_dup"/></svg>
<svg class="r" style="left:777px;top:35px;" width="32" height="32" viewBox="0 0 32 32"><use href="#b_cube"/></svg>
<svg class="r" style="left:852.5px;top:35px;" width="32" height="32" viewBox="0 0 32 32"><use href="#b_house"/></svg>
<svg class="r" style="left:896px;top:35px;" width="32" height="32" viewBox="0 0 32 32"><use href="#b_person_b"/></svg>
<svg class="r" style="left:951px;top:35px;" width="32" height="32" viewBox="0 0 32 32"><use href="#b_person_g"/></svg>
<svg class="r" style="left:1010px;top:35px;" width="32" height="32" viewBox="0 0 32 32"><use href="#b_paper"/></svg>
<svg class="r" style="left:1089px;top:35px;" width="32" height="32" viewBox="0 0 32 32"><use href="#b_cube"/></svg>
<svg class="r" style="left:1165px;top:37px;" width="16" height="16" viewBox="0 0 16 16"><use href="#i_card_g"/></svg>
<svg class="r" style="left:1165px;top:62px;" width="16" height="16" viewBox="0 0 16 16"><use href="#i_card_b"/></svg>
<svg class="r" style="left:1165px;top:87px;" width="16" height="16" viewBox="0 0 16 16"><use href="#i_card_o"/></svg>
<svg class="r" style="left:1281px;top:50.5px;" width="16" height="16" viewBox="0 0 16 16"><use href="#i_search"/></svg>
<svg class="r" style="left:1281px;top:75.5px;" width="16" height="16" viewBox="0 0 16 16"><use href="#i_card_g"/></svg>
<svg class="r" style="left:17px;top:185px;" width="16" height="16" viewBox="0 0 16 16"><use href="#i_new"/></svg>
<svg class="r" style="left:17px;top:213px;" width="16" height="16" viewBox="0 0 16 16"><use href="#i_del_d"/></svg>
<svg class="r" style="left:17px;top:239px;" width="16" height="16" viewBox="0 0 16 16"><use href="#i_person_b"/></svg>
<svg class="r" style="left:17px;top:265.5px;" width="16" height="16" viewBox="0 0 16 16"><use href="#i_house"/></svg>
<svg class="r" style="left:17px;top:291px;" width="16" height="16" viewBox="0 0 16 16"><use href="#i_pencil"/></svg>
<svg class="r" style="left:17px;top:317.5px;" width="16" height="16" viewBox="0 0 16 16"><use href="#i_refresh"/></svg>
<svg class="r" style="left:431px;top:188px;" width="16" height="16" viewBox="0 0 16 16"><use href="#i_word"/></svg>
<svg class="r" style="left:431px;top:223px;" width="16" height="16" viewBox="0 0 16 16"><use href="#i_excel"/></svg>
<svg class="r" style="left:431px;top:258.5px;" width="16" height="16" viewBox="0 0 16 16"><use href="#i_print"/></svg>
<svg class="r" style="left:431px;top:293.5px;" width="16" height="16" viewBox="0 0 16 16"><use href="#i_refresh"/></svg>
<svg class="r" style="left:431px;top:326px;" width="16" height="16" viewBox="0 0 16 16"><use href="#i_env"/></svg>
<svg class="r" style="left:1381px;top:186.5px;" width="16" height="16" viewBox="0 0 16 16"><use href="#i_wrench"/></svg>
</div>
</body></html>
